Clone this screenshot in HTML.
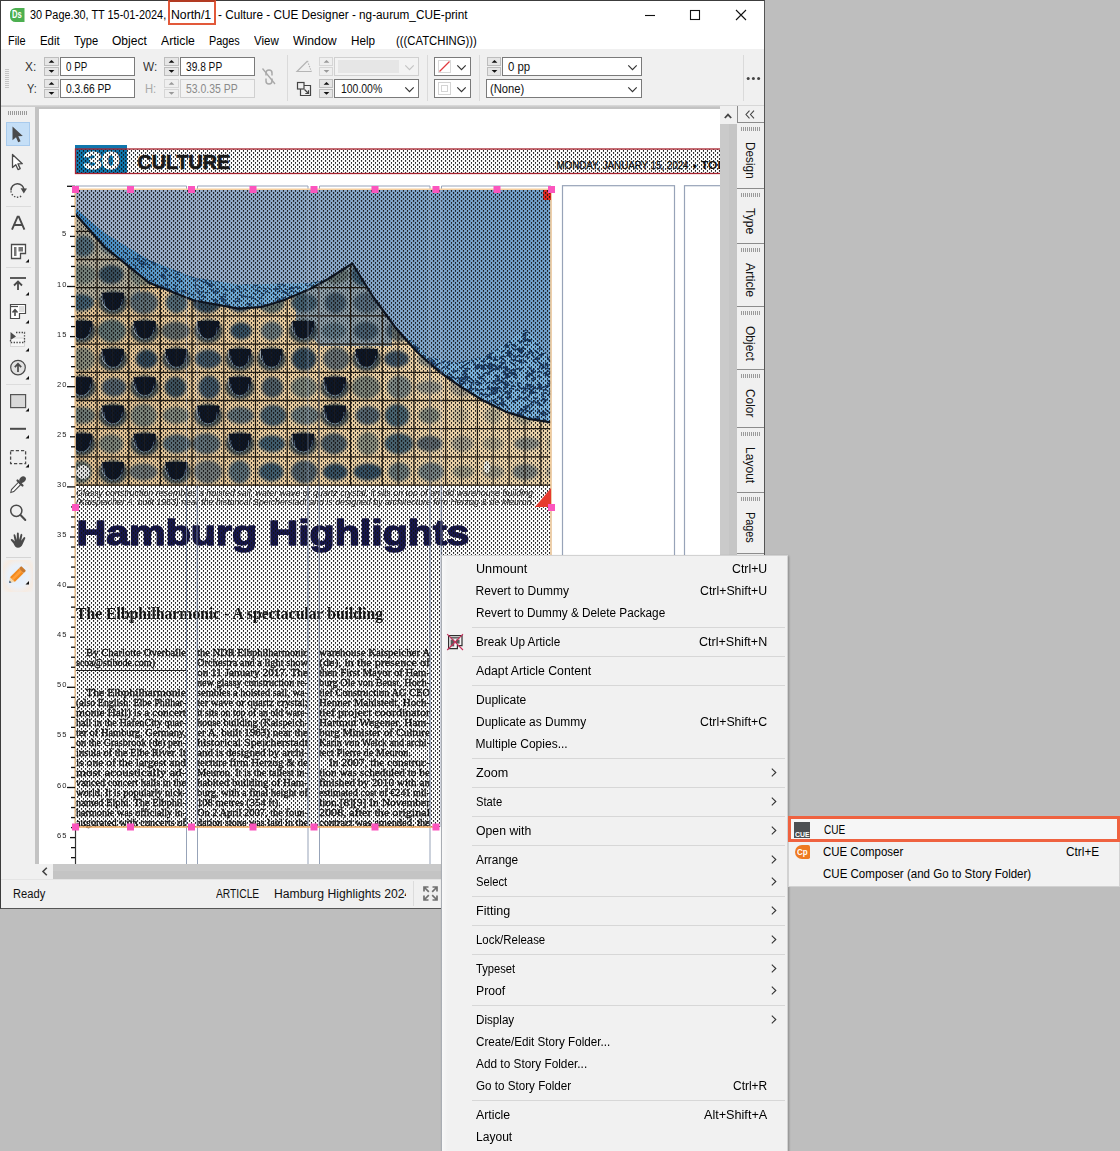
<!DOCTYPE html>
<html><head><meta charset="utf-8"><title>CUE Designer</title>
<style>
html,body{margin:0;padding:0;}
body{width:1120px;height:1151px;overflow:hidden;background:#bebebe;position:relative;font-family:"Liberation Sans",sans-serif;font-size:12px;color:#111;}
.a{position:absolute;}
.t{position:absolute;white-space:pre;color:#111;transform-origin:0 0;}
.fld{position:absolute;background:#fff;border:1px solid #7a7a7a;box-sizing:border-box;}
.fld.dis{background:#f3f3f3;border-color:#d0d0d0;}
.spn{position:absolute;background:#e4e4e4;border:1px solid #c2c2c2;box-sizing:border-box;}
.sep{position:absolute;background:#d7d7d7;height:1px;}
.vsep{position:absolute;background:#dadada;width:1px;}
.tab{position:absolute;left:737px;width:27px;background:#f0f0f0;border-top:1px solid #8c8c8c;box-sizing:border-box;}
.grip{position:absolute;height:4px;background:repeating-linear-gradient(90deg,#9a9a9a 0,#9a9a9a 1px,transparent 1px,transparent 2px);}
.vt{position:absolute;white-space:pre;transform-origin:0 0;transform:rotate(90deg);color:#111;}
</style></head><body>
<div class="a" id="win" style="left:0;top:0;width:765px;height:909px;background:#f0f0f0;overflow:hidden;"><div class="a" style="left:0;top:0;width:765px;height:49px;background:#fff;"></div><svg class="a" style="left:10px;top:8px" width="15" height="14" viewBox="0 0 15 14"><path d="M5.5 0H14.5V14H5.5A5.5 5.5 0 0 1 0 8.5V5.5A5.5 5.5 0 0 1 5.5 0Z" fill="#4caf50"/></svg><span class="t" style="left:12.40px;top:10.04px;font:normal bold 10px/10px 'Liberation Sans';transform:scaleX(0.7658);color:#fff;">Ds</span><span class="t" style="left:30.10px;top:9.44px;font:normal normal 12px/12px 'Liberation Sans';transform:scaleX(0.9059);color:#000;">30 Page.30, TT 15-01-2024,</span><span class="t" style="left:171.30px;top:9.44px;font:normal normal 12px/12px 'Liberation Sans';transform:scaleX(1.0188);color:#000;">North/1</span><span class="t" style="left:217.60px;top:9.44px;font:normal normal 12px/12px 'Liberation Sans';transform:scaleX(0.9794);color:#000;">- Culture - CUE Designer - ng-aurum_CUE-print</span><svg class="a" style="left:640px;top:5px" width="115" height="20" viewBox="0 0 115 20" fill="none" stroke="#111" stroke-width="1.1">
<path d="M5 10.5H15"/><rect x="50.5" y="5.5" width="9" height="9"/><path d="M96 5L106 15M106 5L96 15"/></svg><span class="t" style="left:8.20px;top:34.54px;font:normal normal 12px/12px 'Liberation Sans';transform:scaleX(0.9099);color:#000;">File</span><span class="t" style="left:40.00px;top:34.54px;font:normal normal 12px/12px 'Liberation Sans';transform:scaleX(0.9474);color:#000;">Edit</span><span class="t" style="left:73.90px;top:34.54px;font:normal normal 12px/12px 'Liberation Sans';transform:scaleX(0.9264);color:#000;">Type</span><span class="t" style="left:111.90px;top:34.54px;font:normal normal 12px/12px 'Liberation Sans';transform:scaleX(1.0032);color:#000;">Object</span><span class="t" style="left:160.80px;top:34.54px;font:normal normal 12px/12px 'Liberation Sans';transform:scaleX(1.0167);color:#000;">Article</span><span class="t" style="left:209.00px;top:34.54px;font:normal normal 12px/12px 'Liberation Sans';transform:scaleX(0.9051);color:#000;">Pages</span><span class="t" style="left:254.10px;top:34.54px;font:normal normal 12px/12px 'Liberation Sans';transform:scaleX(0.9575);color:#000;">View</span><span class="t" style="left:293.20px;top:34.54px;font:normal normal 12px/12px 'Liberation Sans';transform:scaleX(1.0214);color:#000;">Window</span><span class="t" style="left:351.20px;top:34.54px;font:normal normal 12px/12px 'Liberation Sans';transform:scaleX(0.9762);color:#000;">Help</span><span class="t" style="left:395.60px;top:34.54px;font:normal normal 12px/12px 'Liberation Sans';transform:scaleX(0.9421);color:#000;">(((CATCHING)))</span><div class="a" style="left:5px;top:69px;width:4px;height:19px;background:repeating-linear-gradient(180deg,#c4c4c4 0,#c4c4c4 1px,transparent 1px,transparent 2px);"></div><span class="t" style="left:25.10px;top:60.94px;font:normal normal 12px/12px 'Liberation Sans';transform:scaleX(0.9873);color:#333;">X:</span><span class="t" style="left:26.60px;top:83.14px;font:normal normal 12px/12px 'Liberation Sans';transform:scaleX(0.9076);color:#333;">Y:</span><div class="spn" style="left:44px;top:57px;width:15px;height:9px;background:#e6e6e6;border-color:#bdbdbd"></div><div class="spn" style="left:44px;top:67px;width:15px;height:9px;background:#e6e6e6;border-color:#bdbdbd"></div><svg class="a" style="left:48px;top:57px" width="7" height="19" viewBox="0 0 7 19"><path d="M0.6 5.8L3.5 2.9L6.4 5.8Z" fill="#111"/><path d="M0.6 12.9L3.5 15.8L6.4 12.9Z" fill="#111"/></svg><div class="spn" style="left:44px;top:79px;width:15px;height:9px;background:#e6e6e6;border-color:#bdbdbd"></div><div class="spn" style="left:44px;top:89px;width:15px;height:9px;background:#e6e6e6;border-color:#bdbdbd"></div><svg class="a" style="left:48px;top:79px" width="7" height="19" viewBox="0 0 7 19"><path d="M0.6 5.8L3.5 2.9L6.4 5.8Z" fill="#111"/><path d="M0.6 12.9L3.5 15.8L6.4 12.9Z" fill="#111"/></svg><div class="fld" style="left:60px;top:57px;width:75px;height:19px"></div><div class="fld" style="left:60px;top:79px;width:75px;height:19px"></div><span class="t" style="left:65.60px;top:60.94px;font:normal normal 12px/12px 'Liberation Sans';transform:scaleX(0.8149);">0 PP</span><span class="t" style="left:65.60px;top:83.14px;font:normal normal 12px/12px 'Liberation Sans';transform:scaleX(0.8574);">0.3.66 PP</span><span class="t" style="left:142.60px;top:60.94px;font:normal normal 12px/12px 'Liberation Sans';transform:scaleX(0.9825);color:#333;">W:</span><span class="t" style="left:145.10px;top:83.14px;font:normal normal 12px/12px 'Liberation Sans';transform:scaleX(0.9333);color:#a8a8a8;">H:</span><div class="spn" style="left:164px;top:57px;width:15px;height:9px;background:#e6e6e6;border-color:#bdbdbd"></div><div class="spn" style="left:164px;top:67px;width:15px;height:9px;background:#e6e6e6;border-color:#bdbdbd"></div><svg class="a" style="left:168px;top:57px" width="7" height="19" viewBox="0 0 7 19"><path d="M0.6 5.8L3.5 2.9L6.4 5.8Z" fill="#111"/><path d="M0.6 12.9L3.5 15.8L6.4 12.9Z" fill="#111"/></svg><div class="spn" style="left:164px;top:79px;width:15px;height:9px;background:#efefef;border-color:#d6d6d6"></div><div class="spn" style="left:164px;top:89px;width:15px;height:9px;background:#efefef;border-color:#d6d6d6"></div><svg class="a" style="left:168px;top:79px" width="7" height="19" viewBox="0 0 7 19"><path d="M0.6 5.8L3.5 2.9L6.4 5.8Z" fill="#9a9a9a"/><path d="M0.6 12.9L3.5 15.8L6.4 12.9Z" fill="#9a9a9a"/></svg><div class="fld" style="left:180px;top:57px;width:75px;height:19px"></div><div class="fld dis" style="left:180px;top:79px;width:75px;height:19px"></div><span class="t" style="left:185.60px;top:60.94px;font:normal normal 12px/12px 'Liberation Sans';transform:scaleX(0.8477);">39.8 PP</span><span class="t" style="left:185.60px;top:83.14px;font:normal normal 12px/12px 'Liberation Sans';transform:scaleX(0.8705);color:#8a8a8a;">53.0.35 PP</span><svg class="a" style="left:260px;top:66px" width="18" height="22" viewBox="0 0 18 22" fill="none" stroke="#a9a9a9" stroke-width="1.5"><path d="M6 9.5V7a3 3 0 0 1 6 0V9.5M6 12.5v2.5a3 3 0 0 0 6 0V12.5"/><path d="M2.5 2.5L15 18" stroke-width="1.3"/></svg><div class="vsep" style="left:287px;top:55px;height:46px"></div><svg class="a" style="left:295px;top:58px" width="18" height="16" viewBox="0 0 18 16" fill="none" stroke="#b5b5b5" stroke-width="1.2"><path d="M12.5 3L2 13.5H16.5"/><path d="M12.5 3L16.3 13.5" stroke-dasharray="1.4 1.2"/></svg><svg class="a" style="left:296px;top:81px" width="17" height="16" viewBox="0 0 17 16" fill="none" stroke="#444" stroke-width="1.2"><rect x="1.5" y="1.5" width="6.5" height="6.5"/><path d="M4.5 8V14.5H14.5V4.5H8"/><path d="M8.5 8.5L12.5 12.5M12.5 9.3V12.5H9.3"/></svg><div class="spn" style="left:319px;top:57px;width:14px;height:9px;background:#efefef;border-color:#d6d6d6"></div><div class="spn" style="left:319px;top:67px;width:14px;height:9px;background:#efefef;border-color:#d6d6d6"></div><svg class="a" style="left:322.5px;top:57px" width="7" height="19" viewBox="0 0 7 19"><path d="M0.6 5.8L3.5 2.9L6.4 5.8Z" fill="#9a9a9a"/><path d="M0.6 12.9L3.5 15.8L6.4 12.9Z" fill="#9a9a9a"/></svg><div class="spn" style="left:319px;top:79px;width:14px;height:9px;background:#e6e6e6;border-color:#bdbdbd"></div><div class="spn" style="left:319px;top:89px;width:14px;height:9px;background:#e6e6e6;border-color:#bdbdbd"></div><svg class="a" style="left:322.5px;top:79px" width="7" height="19" viewBox="0 0 7 19"><path d="M0.6 5.8L3.5 2.9L6.4 5.8Z" fill="#111"/><path d="M0.6 12.9L3.5 15.8L6.4 12.9Z" fill="#111"/></svg><div class="fld dis" style="left:334px;top:57px;width:85px;height:19px"></div><div class="a" style="left:338px;top:60px;width:61px;height:13px;background:#e6e6e6"></div><svg class="a" style="left:404px;top:64px" width="11" height="7" viewBox="0 0 11 7"><path d="M1.3 1.4L5.5 5.6L9.7 1.4" fill="none" stroke="#c4c4c4" stroke-width="1.2"/></svg><div class="fld" style="left:334px;top:79px;width:85px;height:19px"></div><span class="t" style="left:340.60px;top:83.14px;font:normal normal 12px/12px 'Liberation Sans';transform:scaleX(0.8697);">100.00%</span><svg class="a" style="left:404px;top:86px" width="11" height="7" viewBox="0 0 11 7"><path d="M1.3 1.4L5.5 5.6L9.7 1.4" fill="none" stroke="#333" stroke-width="1.2"/></svg><div class="vsep" style="left:427px;top:55px;height:46px"></div><div class="fld" style="left:434px;top:57px;width:37px;height:19px"></div><svg class="a" style="left:438px;top:60px" width="13" height="13" viewBox="0 0 13 13"><rect x="0.5" y="0.5" width="12" height="12" fill="#fff" stroke="#d9d9d9"/><path d="M1.5 11.5L11.5 1.5" stroke="#e0393e" stroke-width="1.3"/></svg><svg class="a" style="left:456px;top:64px" width="11" height="7" viewBox="0 0 11 7"><path d="M1.3 1.4L5.5 5.6L9.7 1.4" fill="none" stroke="#333" stroke-width="1.2"/></svg><div class="fld" style="left:434px;top:79px;width:37px;height:19px"></div><svg class="a" style="left:438px;top:82px" width="13" height="13" viewBox="0 0 13 13" fill="none" stroke="#d4d4d4"><rect x="0.5" y="0.5" width="12" height="12"/><rect x="3.5" y="3.5" width="6" height="6"/></svg><svg class="a" style="left:456px;top:86px" width="11" height="7" viewBox="0 0 11 7"><path d="M1.3 1.4L5.5 5.6L9.7 1.4" fill="none" stroke="#333" stroke-width="1.2"/></svg><div class="vsep" style="left:479px;top:55px;height:46px"></div><div class="spn" style="left:487px;top:57px;width:14px;height:9px;background:#e6e6e6;border-color:#bdbdbd"></div><div class="spn" style="left:487px;top:67px;width:14px;height:9px;background:#e6e6e6;border-color:#bdbdbd"></div><svg class="a" style="left:490.5px;top:57px" width="7" height="19" viewBox="0 0 7 19"><path d="M0.6 5.8L3.5 2.9L6.4 5.8Z" fill="#111"/><path d="M0.6 12.9L3.5 15.8L6.4 12.9Z" fill="#111"/></svg><div class="fld" style="left:502px;top:57px;width:140px;height:19px"></div><span class="t" style="left:507.60px;top:60.94px;font:normal normal 12px/12px 'Liberation Sans';transform:scaleX(0.9504);">0 pp</span><svg class="a" style="left:627px;top:64px" width="11" height="7" viewBox="0 0 11 7"><path d="M1.3 1.4L5.5 5.6L9.7 1.4" fill="none" stroke="#333" stroke-width="1.2"/></svg><div class="fld" style="left:486px;top:79px;width:156px;height:19px"></div><span class="t" style="left:489.60px;top:83.14px;font:normal normal 12px/12px 'Liberation Sans';transform:scaleX(0.9322);">(None)</span><svg class="a" style="left:627px;top:86px" width="11" height="7" viewBox="0 0 11 7"><path d="M1.3 1.4L5.5 5.6L9.7 1.4" fill="none" stroke="#333" stroke-width="1.2"/></svg><div class="vsep" style="left:743px;top:55px;height:46px"></div><svg class="a" style="left:746px;top:76px" width="15" height="5" viewBox="0 0 15 5" fill="#444"><circle cx="2.2" cy="2.5" r="1.5"/><circle cx="7.4" cy="2.5" r="1.5"/><circle cx="12.6" cy="2.5" r="1.5"/></svg><div class="a" style="left:1px;top:105px;width:763px;height:4px;background:linear-gradient(180deg,#dcdcdc,#c3c3c3 60%,#c3c3c3)"></div><div class="a" style="left:1px;top:107px;width:34px;height:773px;background:#f0f0f0"></div><div class="a" style="left:35px;top:107px;width:4px;height:757px;background:#c3c3c3"></div><div class="grip" style="left:8px;top:111px;width:20px;"></div><div class="a" style="left:6px;top:122px;width:24px;height:24px;background:#c5dff7;border:1px solid #a9cbed;box-sizing:border-box"></div><svg class="a" style="left:8px;top:124px" width="22" height="22" viewBox="0 0 22 22"><path d="M4.5 2.5L4.5 16.2L8 13.2L10.2 18.3L12.6 17.2L10.3 12.3L14.8 12.1Z" fill="#4a4a4a"/></svg><svg class="a" style="left:8px;top:152px" width="22" height="22" viewBox="0 0 22 22"><path d="M4.5 2.5L4.5 15.5L7.8 12.7L10 17.6L12.2 16.6L10 11.9L14.3 11.7Z" fill="#fff" stroke="#4a4a4a" stroke-width="1.3" stroke-linejoin="round"/></svg><svg class="a" style="left:8px;top:179px" width="22" height="22" viewBox="0 0 22 22"><path d="M3 11.5A6.5 6.5 0 0 1 16 11" fill="none" stroke="#4a4a4a" stroke-width="1.5"/><path d="M12.6 9.2L19 9.6L15.8 14.6Z" fill="#4a4a4a"/><path d="M3 12.2A6.5 6.5 0 0 0 13.5 16.8" fill="none" stroke="#4a4a4a" stroke-width="1.4" stroke-dasharray="1.4 1.6"/></svg><div class="sep" style="left:6px;top:206px;width:25px;background:#dcdcdc"></div><svg class="a" style="left:8px;top:212px" width="22" height="22" viewBox="0 0 22 22"><path d="M4 17.6L9.6 4.6H10.8L16.4 17.6M6 13H14.4" fill="none" stroke="#4a4a4a" stroke-width="1.9"/></svg><svg class="a" style="left:8px;top:241px" width="22" height="22" viewBox="0 0 22 22"><path d="M3.5 3.5H17.5V12.5H12.5V17.5H3.5Z" fill="#fff" stroke="#4a4a4a" stroke-width="1.3"/><rect x="6" y="6" width="2.5" height="9" fill="#777"/><rect x="10.5" y="6" width="4.5" height="4.5" fill="#777"/><path d="M21 18V21.5H17.5Z" fill="#111"/></svg><div class="sep" style="left:6px;top:267px;width:25px;background:#dcdcdc"></div><svg class="a" style="left:8px;top:268px" width="22" height="28" viewBox="0 0 22 28"><path d="M2 10H18" stroke="#4a4a4a" stroke-width="1.8"/><path d="M10 22V14M6 17.5L10 13.5L14 17.5" fill="none" stroke="#4a4a4a" stroke-width="1.8"/><path d="M21 24V27.5H17.5Z" fill="#111"/></svg><svg class="a" style="left:8px;top:296px" width="22" height="28" viewBox="0 0 22 28"><path d="M2.5 8.5H17.5V17.5H11.5V22.5H2.5Z" fill="#fff" stroke="#4a4a4a" stroke-width="1.2"/><path d="M3 10.5H10" stroke="#4a4a4a" stroke-width="1.2"/><rect x="11" y="10" width="5" height="6" fill="#ddd"/><path d="M7 20V14M4.5 16.5L7 13.7L9.5 16.5" fill="none" stroke="#4a4a4a" stroke-width="1.6"/><path d="M21 24V27.5H17.5Z" fill="#111"/></svg><svg class="a" style="left:8px;top:324px" width="22" height="28" viewBox="0 0 22 28"><rect x="2.5" y="14" width="14" height="8.5" fill="#f6f6f6" stroke="#d0d0d0" stroke-width="0.8"/><path d="M8 8.5H16.5V18.5H2.5V16" fill="none" stroke="#4a4a4a" stroke-width="1.3" stroke-dasharray="1.4 1.4"/><path d="M2.5 8L2.5 16L8 12.5Z" fill="#4a4a4a"/><path d="M21 24V27.5H17.5Z" fill="#111"/></svg><svg class="a" style="left:8px;top:356px" width="22" height="24" viewBox="0 0 22 24"><circle cx="10" cy="11.6" r="7.3" fill="#e2e2e2" stroke="#4a4a4a" stroke-width="1.2"/><path d="M10 16V8.5M6.8 11.2L10 7.8L13.2 11.2" fill="none" stroke="#4a4a4a" stroke-width="1.7"/><path d="M21 20V23.5H17.5Z" fill="#111"/></svg><div class="sep" style="left:6px;top:384px;width:25px;background:#dcdcdc"></div><svg class="a" style="left:8px;top:390px" width="22" height="22" viewBox="0 0 22 22"><rect x="2.6" y="4.6" width="15" height="13" fill="#d9d9d9" stroke="#555" stroke-width="1.2"/><path d="M21 18V21.5H17.5Z" fill="#111"/></svg><svg class="a" style="left:8px;top:420px" width="22" height="22" viewBox="0 0 22 22"><path d="M2 8.8H18" stroke="#4a4a4a" stroke-width="2"/><path d="M21 15V18.5H17.5Z" fill="#111"/></svg><svg class="a" style="left:8px;top:446px" width="22" height="22" viewBox="0 0 22 22"><rect x="2.6" y="4.6" width="15" height="13" fill="none" stroke="#4a4a4a" stroke-width="1.3" stroke-dasharray="3.2 2"/><path d="M21 18V21.5H17.5Z" fill="#111"/></svg><svg class="a" style="left:8px;top:474px" width="22" height="22" viewBox="0 0 22 22"><path d="M2.8 18.5L3.5 15.5L10.5 8.2L12.8 10.5L5.8 17.6Z" fill="#fff" stroke="#4a4a4a" stroke-width="1.1"/><path d="M9.5 6.5L14.5 11.5" stroke="#4a4a4a" stroke-width="2.2" stroke-linecap="round"/><ellipse cx="14.6" cy="5.6" rx="3.6" ry="2.8" transform="rotate(-45 14.6 5.6)" fill="#4a4a4a"/></svg><svg class="a" style="left:8px;top:502px" width="22" height="22" viewBox="0 0 22 22"><circle cx="8.3" cy="8.8" r="5.6" fill="none" stroke="#4a4a4a" stroke-width="1.5"/><path d="M12.5 13L17.3 18" stroke="#4a4a4a" stroke-width="2" stroke-linecap="round"/></svg><svg class="a" style="left:8px;top:530px" width="22" height="22" viewBox="0 0 22 22"><path d="M5.5 13.5L3 10.5Q2.3 9.3 3.4 9Q4.3 8.9 5.2 9.8L6.8 11.5L5.6 5.4Q5.5 4.3 6.3 4.2Q7.1 4.2 7.4 5.2L8.7 10L8.9 3.6Q9 2.6 9.8 2.6Q10.7 2.6 10.8 3.6L11 10L12.6 4.6Q12.9 3.7 13.7 3.9Q14.5 4.2 14.3 5.2L13.2 10.8L15.6 7.6Q16.3 6.8 17 7.3Q17.6 7.9 17.1 8.8L14.6 14.2Q13.3 17.6 10 17.7Q7 17.7 5.5 13.5Z" fill="#4a4a4a"/></svg><div class="sep" style="left:6px;top:557px;width:25px;background:#d4d4d4"></div><div class="a" style="left:3px;top:560px;width:30px;height:32px;background:radial-gradient(ellipse at center,#e3eefb 0,#eaf1fa 45%,#f6ebe2 75%,#f0f0f0 100%)"></div><svg class="a" style="left:8px;top:563px" width="22" height="22" viewBox="0 0 22 22"><g transform="rotate(-45 10 11)"><rect x="2" y="7.6" width="12.5" height="6.8" fill="#f28a1e"/><rect x="2" y="9.6" width="12.5" height="2.6" fill="#ff9f3a"/><rect x="14.5" y="7.6" width="3.5" height="6.8" rx="1" fill="#c9792e"/><path d="M2 7.6L-2.5 11L2 14.4Z" fill="#f3d9b0"/><path d="M-0.6 9.6L-2.6 11L-0.6 12.4Z" fill="#2f4f7a"/></g><path d="M21 18V21.5H17.5Z" fill="#111"/></svg><div class="a" id="canvas" style="left:39px;top:109px;width:681px;height:755px;background:#fff;overflow:hidden"><svg class="a" style="left:0;top:0" width="681" height="755" viewBox="39 109 681 755" font-family="Liberation Sans, sans-serif"><defs>
<pattern id="hatch" width="4" height="4" patternUnits="userSpaceOnUse"><rect x="2.95" y="2.1" width="1.2" height="1.65" fill="#101010"/><rect x="0.95" y="0.1" width="1.2" height="1.65" fill="#101010"/></pattern>
<pattern id="scales" width="7" height="6" patternUnits="userSpaceOnUse"><path d="M0 3L2 1.5L3.5 3M3.5 6L5.5 4.5L7 6" stroke="#0e2c55" stroke-width="1.3" fill="none"/></pattern>
<pattern id="scales2" width="9" height="5" patternUnits="userSpaceOnUse" patternTransform="rotate(28)"><path d="M0 2.5H3.5M5 5H8" stroke="#123a6b" stroke-width="1.1" fill="none" opacity="0.75"/></pattern>
<linearGradient id="sky" x1="0" y1="0" x2="1" y2="0"><stop offset="0" stop-color="#a0b0c8"/><stop offset="0.45" stop-color="#8ea9c8"/><stop offset="1" stop-color="#70a0cc"/></linearGradient>
<linearGradient id="band" x1="0" y1="0" x2="1" y2="0"><stop offset="0" stop-color="#3f86c0"/><stop offset="0.5" stop-color="#69a6d4"/><stop offset="1" stop-color="#78b2dc"/></linearGradient>
<linearGradient id="fac" x1="0" y1="0" x2="1" y2="0"><stop offset="0" stop-color="#e2c293"/><stop offset="0.5" stop-color="#edd0a2"/><stop offset="1" stop-color="#eed6ad"/></linearGradient>
<clipPath id="facclip"><path id="facp" d="M75,213.5 L104.6,247 L149,282.7 L194,300.5 L238.6,308.6 L261,307 L283,300.5 L310,289 L328,279 L352.4,263.5 L372.5,296 L395,327 L417,352 L439.5,372 L462,387.6 L484,401 L506.4,412 L528.8,419 L551,422.4 L551,486 L75,486 Z"/></clipPath>
<filter id="blur2" x="-5%" y="-5%" width="110%" height="110%"><feGaussianBlur stdDeviation="1.8"/></filter><filter id="blur05"><feGaussianBlur stdDeviation="0.5"/></filter><clipPath id="imgclip"><rect x="75" y="190" width="476" height="296"/></clipPath>
</defs><rect x="75" y="145" width="52" height="28.5" fill="#0f77ad"/><text x="83.5" y="168.6" font-size="24" font-weight="bold" fill="#fff" stroke="#fff" stroke-width="1.1" textLength="36" lengthAdjust="spacingAndGlyphs">30</text><text x="137.5" y="168.6" font-size="20.5" font-weight="bold" fill="#1c1c1c" stroke="#1c1c1c" stroke-width="0.7" textLength="92.5" lengthAdjust="spacingAndGlyphs">CULTURE</text><text x="556.5" y="169" font-size="10" fill="#111" stroke="#111" stroke-width="0.25" textLength="132" lengthAdjust="spacingAndGlyphs">MONDAY, JANUARY 15, 2024</text><text x="692.5" y="169" font-size="9" fill="#111">♦</text><text x="701" y="169" font-size="10" font-weight="bold" fill="#111" textLength="52" lengthAdjust="spacingAndGlyphs">TODAY’S</text><rect x="75" y="149" width="700" height="24.5" fill="url(#hatch)"/><rect x="75.5" y="149" width="700" height="24.5" fill="none" stroke="#a8222f" stroke-width="1.3"/><path d="M75.5 870V186H186.5V870" fill="none" stroke="#97a3b8" stroke-width="1"/><path d="M197.5 870V186H308V870" fill="none" stroke="#97a3b8" stroke-width="1"/><path d="M319.5 870V186H430V870" fill="none" stroke="#97a3b8" stroke-width="1"/><path d="M441.5 870V186H551V870" fill="none" stroke="#97a3b8" stroke-width="1"/><rect x="562.5" y="185.7" width="112" height="700" fill="none" stroke="#97a3b8" stroke-width="1.2"/><rect x="684.5" y="185.7" width="112" height="700" fill="none" stroke="#97a3b8" stroke-width="1.2"/><g clip-path="url(#imgclip)"><rect x="75" y="190" width="476" height="296" fill="url(#sky)"/><clipPath id="brclip"><path d="M404,333 L428.6,357 L457,363 L485.7,355.7 L507,343 L525.7,328.6 L537,341.4 L551,361 L551,423 L528.8,419 L506.4,412 L484,401 L462,387.6 L439.5,372 L417,352 Z"/></clipPath><path d="M404,333 L428.6,357 L457,363 L485.7,355.7 L507,343 L525.7,328.6 L537,341.4 L551,361 L551,423 L528.8,419 L506.4,412 L484,401 L462,387.6 L439.5,372 L417,352 Z" fill="#7cb4e0"/><g clip-path="url(#brclip)" stroke="#0f2f5c" stroke-width="1.5" stroke-linecap="round" opacity="0.85"><path d="M452.6 342.5l3.2 -1.6"/><path d="M415.6 379.4l3.5 0.3"/><path d="M490.7 415.3l2.8 1.8"/><path d="M410.5 369.6l3.2 -1.6"/><path d="M440.4 380.9l3.2 -1.6"/><path d="M526.5 339.9l2.8 1.8"/><path d="M497.7 384.0l3.2 -1.6"/><path d="M489.8 366.1l2.8 1.8"/><path d="M411.8 410.4l3.5 0.3"/><path d="M466.6 379.9l1.5 -2.2"/><path d="M450.3 406.3l2.8 1.8"/><path d="M420.1 382.8l2.8 1.8"/><path d="M459.7 380.6l3.2 -1.6"/><path d="M488.0 387.4l2.0 2.2"/><path d="M505.0 369.0l3.5 0.3"/><path d="M473.4 416.7l3.5 0.3"/><path d="M449.1 404.3l2.8 1.8"/><path d="M417.0 356.8l2.0 2.2"/><path d="M533.6 398.0l3.5 0.3"/><path d="M494.5 335.0l1.5 -2.2"/><path d="M466.5 400.7l2.8 1.8"/><path d="M542.2 368.5l3.2 -1.6"/><path d="M517.4 383.0l3.5 0.3"/><path d="M455.0 361.6l2.0 2.2"/><path d="M490.2 371.8l3.2 -1.6"/><path d="M543.9 373.5l3.2 -1.6"/><path d="M413.9 395.3l1.5 -2.2"/><path d="M551.0 406.9l3.5 0.3"/><path d="M510.3 413.2l3.5 0.3"/><path d="M408.3 372.3l2.8 1.8"/><path d="M494.8 375.4l2.8 1.8"/><path d="M517.9 340.4l2.8 1.8"/><path d="M463.5 416.0l2.0 2.2"/><path d="M416.8 371.1l1.5 -2.2"/><path d="M445.8 341.1l2.0 2.2"/><path d="M532.0 354.7l2.0 2.2"/><path d="M550.0 393.5l2.0 2.2"/><path d="M545.8 342.5l2.8 1.8"/><path d="M427.2 391.2l3.2 -1.6"/><path d="M476.3 384.6l3.5 0.3"/><path d="M446.4 342.0l1.5 -2.2"/><path d="M459.3 382.4l2.8 1.8"/><path d="M506.5 377.5l1.5 -2.2"/><path d="M501.3 399.0l2.0 2.2"/><path d="M537.2 402.9l1.5 -2.2"/><path d="M462.7 366.3l3.2 -1.6"/><path d="M475.8 366.4l2.8 1.8"/><path d="M414.9 348.0l2.8 1.8"/><path d="M421.2 385.7l3.2 -1.6"/><path d="M405.0 342.5l3.2 -1.6"/><path d="M544.5 386.9l3.2 -1.6"/><path d="M533.5 387.0l2.8 1.8"/><path d="M498.3 419.7l1.5 -2.2"/><path d="M458.5 339.8l2.0 2.2"/><path d="M551.0 372.7l2.0 2.2"/><path d="M450.8 341.8l3.5 0.3"/><path d="M513.8 373.9l2.8 1.8"/><path d="M480.9 347.7l1.5 -2.2"/><path d="M458.2 394.2l3.2 -1.6"/><path d="M516.4 356.6l3.2 -1.6"/><path d="M507.3 353.1l3.5 0.3"/><path d="M538.5 362.1l2.8 1.8"/><path d="M483.3 402.8l3.5 0.3"/><path d="M498.6 386.9l2.8 1.8"/><path d="M523.5 406.6l2.8 1.8"/><path d="M434.4 375.3l3.2 -1.6"/><path d="M550.5 403.9l2.0 2.2"/><path d="M443.1 394.5l3.5 0.3"/><path d="M470.7 418.0l3.5 0.3"/><path d="M545.4 363.0l2.8 1.8"/><path d="M420.0 373.1l3.5 0.3"/><path d="M435.0 387.9l1.5 -2.2"/><path d="M528.5 374.0l3.5 0.3"/><path d="M522.5 336.1l3.2 -1.6"/><path d="M538.7 403.1l2.8 1.8"/><path d="M475.3 345.1l3.5 0.3"/><path d="M417.8 418.8l2.0 2.2"/><path d="M473.1 399.4l3.2 -1.6"/><path d="M511.5 344.3l2.8 1.8"/><path d="M409.0 384.7l2.0 2.2"/><path d="M523.6 342.0l1.5 -2.2"/><path d="M549.1 391.1l3.5 0.3"/><path d="M427.9 380.6l3.2 -1.6"/><path d="M407.1 421.2l3.2 -1.6"/><path d="M482.4 417.6l2.0 2.2"/><path d="M550.0 346.7l2.8 1.8"/><path d="M409.1 348.4l1.5 -2.2"/><path d="M440.4 384.3l3.5 0.3"/><path d="M485.0 408.1l3.2 -1.6"/><path d="M538.8 362.0l2.0 2.2"/><path d="M502.4 406.2l1.5 -2.2"/><path d="M466.8 416.1l1.5 -2.2"/><path d="M424.2 342.6l1.5 -2.2"/><path d="M407.7 370.3l2.8 1.8"/><path d="M494.5 402.5l2.8 1.8"/><path d="M430.3 373.5l3.2 -1.6"/><path d="M486.8 359.3l1.5 -2.2"/><path d="M483.0 374.3l3.2 -1.6"/><path d="M534.8 333.5l2.8 1.8"/><path d="M445.7 402.1l1.5 -2.2"/><path d="M471.5 330.7l3.2 -1.6"/><path d="M470.2 386.8l1.5 -2.2"/><path d="M494.1 347.1l3.5 0.3"/><path d="M471.5 379.2l2.0 2.2"/><path d="M479.6 351.8l1.5 -2.2"/><path d="M533.9 418.4l3.5 0.3"/><path d="M540.6 413.7l2.8 1.8"/><path d="M528.5 341.2l3.2 -1.6"/><path d="M462.7 358.3l2.8 1.8"/><path d="M468.0 348.4l3.5 0.3"/><path d="M520.2 414.1l2.8 1.8"/><path d="M543.1 389.8l3.5 0.3"/><path d="M426.0 412.8l2.0 2.2"/><path d="M437.3 419.4l2.0 2.2"/><path d="M535.1 343.6l2.8 1.8"/><path d="M428.7 369.4l1.5 -2.2"/><path d="M464.4 368.4l3.5 0.3"/><path d="M451.8 397.3l3.2 -1.6"/><path d="M454.7 372.0l3.2 -1.6"/><path d="M461.5 377.7l3.5 0.3"/><path d="M480.3 334.2l2.8 1.8"/><path d="M547.8 338.1l3.5 0.3"/><path d="M445.0 415.0l2.8 1.8"/><path d="M444.8 340.4l2.0 2.2"/><path d="M529.9 392.9l3.5 0.3"/><path d="M464.7 379.5l1.5 -2.2"/><path d="M488.9 395.2l3.2 -1.6"/><path d="M446.0 404.8l2.8 1.8"/><path d="M467.5 335.0l3.2 -1.6"/><path d="M498.3 405.0l3.2 -1.6"/><path d="M494.4 349.4l3.5 0.3"/><path d="M531.8 371.6l3.5 0.3"/><path d="M551.2 368.1l3.5 0.3"/><path d="M496.4 332.1l2.8 1.8"/><path d="M542.9 421.0l3.5 0.3"/><path d="M412.4 347.4l3.5 0.3"/><path d="M497.4 379.0l2.8 1.8"/><path d="M447.6 376.0l2.8 1.8"/><path d="M444.8 405.2l3.5 0.3"/><path d="M410.4 329.8l1.5 -2.2"/><path d="M486.0 346.2l2.0 2.2"/><path d="M441.1 370.9l2.0 2.2"/><path d="M501.5 380.4l2.0 2.2"/><path d="M547.6 357.5l2.8 1.8"/><path d="M549.4 360.9l2.8 1.8"/><path d="M464.5 361.4l3.2 -1.6"/><path d="M528.0 329.4l3.5 0.3"/><path d="M468.3 333.3l2.0 2.2"/><path d="M533.0 392.4l3.5 0.3"/><path d="M493.0 394.5l3.2 -1.6"/><path d="M472.5 343.1l2.0 2.2"/><path d="M405.5 363.0l3.5 0.3"/><path d="M548.0 380.5l2.8 1.8"/><path d="M410.1 412.7l2.8 1.8"/><path d="M457.4 328.1l2.0 2.2"/><path d="M417.3 354.8l2.8 1.8"/><path d="M441.5 402.5l3.2 -1.6"/><path d="M443.8 336.6l2.0 2.2"/><path d="M491.3 365.8l3.5 0.3"/><path d="M449.7 350.3l1.5 -2.2"/><path d="M545.8 409.9l2.8 1.8"/><path d="M501.7 396.7l1.5 -2.2"/><path d="M462.3 359.3l2.0 2.2"/><path d="M427.0 397.5l2.8 1.8"/><path d="M411.4 408.2l1.5 -2.2"/><path d="M497.2 398.4l1.5 -2.2"/><path d="M425.5 378.3l1.5 -2.2"/><path d="M488.6 406.0l3.2 -1.6"/><path d="M526.5 384.1l2.8 1.8"/><path d="M417.5 332.0l3.5 0.3"/><path d="M546.0 364.2l2.0 2.2"/><path d="M487.1 388.3l1.5 -2.2"/><path d="M505.1 375.0l3.2 -1.6"/><path d="M472.2 334.7l1.5 -2.2"/><path d="M537.0 336.8l1.5 -2.2"/><path d="M414.7 398.7l3.5 0.3"/><path d="M524.0 409.2l2.8 1.8"/><path d="M512.2 347.7l2.0 2.2"/><path d="M477.6 364.7l2.0 2.2"/><path d="M538.8 355.6l3.2 -1.6"/><path d="M495.7 389.7l3.2 -1.6"/><path d="M493.2 359.9l3.5 0.3"/><path d="M496.3 340.8l2.0 2.2"/><path d="M413.9 353.8l3.2 -1.6"/><path d="M506.8 392.9l3.5 0.3"/><path d="M509.2 355.4l2.0 2.2"/><path d="M473.6 339.4l1.5 -2.2"/><path d="M434.3 421.9l2.0 2.2"/><path d="M407.6 372.1l1.5 -2.2"/><path d="M547.3 371.1l3.5 0.3"/><path d="M461.9 416.0l2.8 1.8"/><path d="M416.0 336.7l1.5 -2.2"/><path d="M443.5 362.5l1.5 -2.2"/><path d="M525.6 376.8l3.2 -1.6"/><path d="M508.4 350.2l2.0 2.2"/><path d="M462.9 343.3l2.0 2.2"/><path d="M505.2 366.9l2.8 1.8"/><path d="M466.2 364.1l3.2 -1.6"/><path d="M528.5 328.2l3.5 0.3"/><path d="M528.3 339.5l2.8 1.8"/><path d="M509.8 414.6l3.5 0.3"/><path d="M442.2 334.2l2.0 2.2"/><path d="M551.8 384.6l3.5 0.3"/><path d="M541.0 400.5l3.2 -1.6"/><path d="M446.3 333.0l3.5 0.3"/><path d="M498.3 342.3l3.5 0.3"/><path d="M469.1 358.3l3.5 0.3"/><path d="M520.4 369.1l3.2 -1.6"/><path d="M524.4 388.6l1.5 -2.2"/><path d="M485.7 397.1l3.2 -1.6"/><path d="M542.2 367.4l1.5 -2.2"/><path d="M515.6 389.9l3.5 0.3"/><path d="M476.4 415.5l1.5 -2.2"/><path d="M423.7 373.3l3.5 0.3"/><path d="M446.4 352.6l3.5 0.3"/><path d="M464.7 350.9l2.0 2.2"/><path d="M486.9 365.9l2.8 1.8"/><path d="M499.6 335.2l1.5 -2.2"/><path d="M538.2 375.7l2.8 1.8"/><path d="M471.6 360.0l2.0 2.2"/><path d="M467.8 380.6l2.8 1.8"/><path d="M418.3 360.8l3.2 -1.6"/><path d="M451.9 363.4l1.5 -2.2"/><path d="M434.7 329.9l2.0 2.2"/><path d="M461.3 399.6l2.8 1.8"/><path d="M460.4 360.5l3.2 -1.6"/><path d="M478.2 383.1l3.5 0.3"/><path d="M423.5 376.3l2.8 1.8"/><path d="M418.6 414.1l2.0 2.2"/><path d="M463.8 370.8l3.5 0.3"/><path d="M529.8 411.8l3.2 -1.6"/><path d="M423.7 368.8l2.0 2.2"/><path d="M547.3 375.0l3.2 -1.6"/><path d="M462.6 417.0l1.5 -2.2"/><path d="M530.8 421.3l2.8 1.8"/><path d="M520.1 349.5l2.8 1.8"/><path d="M481.8 393.5l2.0 2.2"/><path d="M417.5 402.6l3.2 -1.6"/><path d="M520.0 350.3l3.2 -1.6"/><path d="M499.9 357.2l2.8 1.8"/><path d="M497.1 378.7l2.0 2.2"/><path d="M507.7 338.8l3.2 -1.6"/><path d="M449.2 418.6l2.8 1.8"/><path d="M462.0 349.5l1.5 -2.2"/><path d="M405.2 379.6l2.0 2.2"/><path d="M446.0 358.4l2.8 1.8"/><path d="M474.9 350.5l2.8 1.8"/><path d="M409.3 367.5l3.5 0.3"/><path d="M413.1 346.6l2.0 2.2"/><path d="M416.9 349.9l2.0 2.2"/><path d="M541.0 349.8l3.2 -1.6"/><path d="M507.3 397.0l3.5 0.3"/><path d="M505.3 347.0l3.5 0.3"/><path d="M513.7 376.5l2.8 1.8"/><path d="M477.9 347.2l2.8 1.8"/><path d="M438.9 349.3l3.5 0.3"/><path d="M421.0 387.9l1.5 -2.2"/><path d="M432.5 349.4l2.0 2.2"/><path d="M538.8 333.4l1.5 -2.2"/><path d="M426.5 365.8l2.8 1.8"/><path d="M408.5 385.2l2.0 2.2"/><path d="M412.6 333.8l2.0 2.2"/><path d="M471.1 396.4l3.5 0.3"/><path d="M512.7 423.8l2.8 1.8"/><path d="M453.4 345.8l1.5 -2.2"/><path d="M514.7 331.1l2.0 2.2"/><path d="M528.4 422.6l2.0 2.2"/><path d="M429.9 328.3l3.5 0.3"/><path d="M416.9 368.3l3.2 -1.6"/><path d="M487.5 400.8l2.0 2.2"/><path d="M457.4 406.9l2.0 2.2"/><path d="M417.9 395.7l2.8 1.8"/><path d="M459.8 416.3l2.8 1.8"/><path d="M452.5 398.8l2.0 2.2"/><path d="M409.5 367.4l2.0 2.2"/><path d="M411.0 331.3l3.2 -1.6"/><path d="M523.1 334.0l2.8 1.8"/><path d="M514.9 414.3l3.5 0.3"/><path d="M458.4 360.2l1.5 -2.2"/><path d="M411.4 399.7l3.5 0.3"/><path d="M540.9 356.6l1.5 -2.2"/><path d="M539.7 388.9l3.2 -1.6"/><path d="M408.6 350.5l2.0 2.2"/><path d="M510.2 372.7l2.0 2.2"/><path d="M521.1 415.7l2.0 2.2"/><path d="M424.5 375.7l3.2 -1.6"/><path d="M523.0 398.9l2.8 1.8"/><path d="M494.3 359.5l3.5 0.3"/><path d="M472.7 403.2l1.5 -2.2"/><path d="M416.6 346.9l2.8 1.8"/><path d="M441.4 334.2l3.2 -1.6"/><path d="M475.8 380.3l2.8 1.8"/><path d="M549.1 412.8l3.2 -1.6"/><path d="M443.9 336.1l3.2 -1.6"/><path d="M466.9 422.9l2.0 2.2"/><path d="M430.5 340.8l2.0 2.2"/><path d="M496.2 392.7l1.5 -2.2"/><path d="M529.5 391.8l3.2 -1.6"/><path d="M519.6 356.2l3.5 0.3"/><path d="M488.3 363.8l3.5 0.3"/><path d="M434.3 351.8l2.8 1.8"/><path d="M439.6 355.0l1.5 -2.2"/><path d="M432.7 334.2l3.5 0.3"/><path d="M550.9 376.7l2.8 1.8"/><path d="M500.5 337.7l2.0 2.2"/><path d="M550.7 337.8l2.0 2.2"/><path d="M534.8 350.2l2.0 2.2"/><path d="M539.4 331.9l3.5 0.3"/><path d="M439.2 332.8l1.5 -2.2"/><path d="M548.0 384.0l3.2 -1.6"/><path d="M459.7 411.1l2.0 2.2"/><path d="M493.6 402.4l3.2 -1.6"/><path d="M420.5 385.2l1.5 -2.2"/><path d="M456.4 331.6l3.5 0.3"/><path d="M425.8 347.6l3.5 0.3"/><path d="M410.6 398.3l2.8 1.8"/><path d="M524.8 406.6l2.0 2.2"/><path d="M504.7 345.8l3.5 0.3"/><path d="M416.5 331.0l2.0 2.2"/><path d="M485.6 334.1l3.2 -1.6"/><path d="M522.0 391.7l2.8 1.8"/><path d="M499.0 336.8l2.8 1.8"/><path d="M463.5 354.0l3.5 0.3"/><path d="M503.2 368.1l3.2 -1.6"/><path d="M450.9 382.4l3.5 0.3"/><path d="M465.9 329.7l3.5 0.3"/><path d="M499.7 365.5l2.0 2.2"/><path d="M434.9 328.6l2.8 1.8"/><path d="M467.3 406.8l2.0 2.2"/><path d="M489.9 363.0l2.8 1.8"/><path d="M424.1 333.0l2.8 1.8"/><path d="M499.2 415.3l3.2 -1.6"/><path d="M489.2 417.0l1.5 -2.2"/><path d="M430.2 361.4l2.8 1.8"/><path d="M481.6 416.8l3.2 -1.6"/><path d="M461.4 400.3l2.8 1.8"/><path d="M449.3 408.4l3.2 -1.6"/><path d="M548.4 374.3l3.2 -1.6"/><path d="M494.3 389.1l3.2 -1.6"/><path d="M537.9 387.6l2.8 1.8"/><path d="M499.1 410.2l1.5 -2.2"/><path d="M464.5 409.2l2.0 2.2"/><path d="M431.9 348.9l2.0 2.2"/><path d="M543.0 343.0l3.5 0.3"/><path d="M423.1 351.7l2.8 1.8"/><path d="M411.0 382.0l3.2 -1.6"/><path d="M503.2 359.1l2.0 2.2"/><path d="M493.1 380.8l3.5 0.3"/><path d="M500.4 357.6l2.8 1.8"/><path d="M467.6 391.2l2.0 2.2"/><path d="M479.0 345.2l3.2 -1.6"/><path d="M496.0 375.0l2.8 1.8"/><path d="M470.7 387.4l2.0 2.2"/><path d="M528.0 405.8l2.0 2.2"/><path d="M420.7 340.3l2.0 2.2"/><path d="M458.7 405.0l1.5 -2.2"/><path d="M480.0 331.9l2.8 1.8"/><path d="M417.1 398.4l1.5 -2.2"/><path d="M416.8 400.2l2.0 2.2"/><path d="M501.0 403.3l3.2 -1.6"/><path d="M531.0 423.6l3.2 -1.6"/><path d="M433.5 422.2l2.0 2.2"/><path d="M447.3 405.9l2.8 1.8"/><path d="M505.9 397.2l2.8 1.8"/><path d="M414.6 361.7l3.5 0.3"/><path d="M428.3 414.1l3.5 0.3"/><path d="M538.0 371.8l3.5 0.3"/><path d="M478.8 416.3l2.8 1.8"/><path d="M492.0 387.1l2.8 1.8"/><path d="M451.9 331.5l2.8 1.8"/><path d="M464.3 389.1l3.5 0.3"/><path d="M504.9 414.0l2.8 1.8"/><path d="M521.4 353.4l1.5 -2.2"/><path d="M412.1 410.4l2.0 2.2"/><path d="M486.6 383.7l3.2 -1.6"/><path d="M442.0 379.4l2.0 2.2"/><path d="M513.5 363.7l2.0 2.2"/><path d="M550.6 383.4l3.5 0.3"/><path d="M453.6 335.8l2.8 1.8"/><path d="M431.0 399.4l3.2 -1.6"/><path d="M448.6 377.5l3.5 0.3"/><path d="M499.0 422.5l1.5 -2.2"/><path d="M541.5 414.0l3.2 -1.6"/><path d="M514.8 349.3l3.5 0.3"/><path d="M495.6 369.5l1.5 -2.2"/><path d="M458.5 332.6l2.0 2.2"/><path d="M438.4 390.7l3.2 -1.6"/><path d="M413.0 382.4l3.5 0.3"/><path d="M420.6 362.3l2.8 1.8"/><path d="M465.7 356.9l2.8 1.8"/><path d="M435.0 387.9l2.0 2.2"/><path d="M428.3 329.4l2.8 1.8"/><path d="M509.0 371.3l3.2 -1.6"/><path d="M498.8 411.6l3.5 0.3"/><path d="M464.1 353.4l3.2 -1.6"/><path d="M413.3 406.8l3.5 0.3"/><path d="M492.4 383.5l1.5 -2.2"/><path d="M542.8 398.4l2.8 1.8"/><path d="M429.3 328.0l3.2 -1.6"/><path d="M483.1 367.0l2.8 1.8"/><path d="M428.4 415.5l3.2 -1.6"/><path d="M406.8 380.9l2.8 1.8"/><path d="M425.9 347.2l1.5 -2.2"/><path d="M499.5 390.2l2.0 2.2"/><path d="M524.6 344.8l3.5 0.3"/><path d="M414.4 388.1l2.0 2.2"/><path d="M510.2 328.6l2.0 2.2"/><path d="M514.5 372.7l2.0 2.2"/><path d="M430.8 423.7l3.5 0.3"/><path d="M439.1 331.7l3.5 0.3"/><path d="M536.0 416.8l3.5 0.3"/><path d="M509.6 353.5l1.5 -2.2"/><path d="M504.8 393.8l1.5 -2.2"/><path d="M547.9 356.4l2.8 1.8"/><path d="M417.6 376.7l2.8 1.8"/><path d="M443.3 350.7l2.8 1.8"/><path d="M543.9 399.6l3.5 0.3"/><path d="M433.2 365.3l1.5 -2.2"/><path d="M440.2 415.1l1.5 -2.2"/><path d="M474.0 408.6l3.2 -1.6"/><path d="M531.1 370.0l2.8 1.8"/><path d="M488.8 357.5l2.8 1.8"/><path d="M462.6 384.2l1.5 -2.2"/><path d="M538.9 341.9l3.2 -1.6"/><path d="M421.4 387.7l2.8 1.8"/><path d="M455.7 341.6l3.2 -1.6"/><path d="M409.5 341.3l3.2 -1.6"/><path d="M507.5 398.7l3.2 -1.6"/><path d="M530.9 401.1l2.8 1.8"/><path d="M525.2 406.7l3.2 -1.6"/><path d="M534.3 400.6l2.0 2.2"/><path d="M420.7 347.7l3.2 -1.6"/><path d="M410.0 419.1l3.2 -1.6"/><path d="M526.3 388.6l3.5 0.3"/><path d="M475.1 340.7l2.8 1.8"/><path d="M448.3 360.3l3.5 0.3"/><path d="M408.1 352.6l3.5 0.3"/><path d="M412.1 400.9l3.5 0.3"/><path d="M518.1 385.8l2.0 2.2"/><path d="M530.2 387.4l3.2 -1.6"/><path d="M521.0 331.0l1.5 -2.2"/><path d="M518.6 361.3l3.2 -1.6"/><path d="M484.1 348.8l3.2 -1.6"/><path d="M489.5 355.6l2.0 2.2"/><path d="M405.2 347.4l3.2 -1.6"/><path d="M405.6 375.1l2.0 2.2"/><path d="M507.2 407.2l2.0 2.2"/><path d="M492.1 419.9l1.5 -2.2"/><path d="M443.3 418.6l3.5 0.3"/><path d="M524.8 418.1l2.8 1.8"/><path d="M478.3 338.6l3.2 -1.6"/><path d="M477.1 423.1l1.5 -2.2"/><path d="M520.7 388.3l3.5 0.3"/><path d="M419.0 417.1l3.2 -1.6"/><path d="M467.1 390.0l3.5 0.3"/><path d="M435.3 353.3l1.5 -2.2"/><path d="M478.7 364.4l2.8 1.8"/><path d="M543.8 340.2l1.5 -2.2"/><path d="M515.9 400.3l3.2 -1.6"/><path d="M456.2 359.4l2.8 1.8"/><path d="M532.6 371.2l1.5 -2.2"/><path d="M514.1 344.3l2.0 2.2"/><path d="M506.3 352.7l2.8 1.8"/><path d="M423.5 372.4l2.8 1.8"/><path d="M479.6 353.7l1.5 -2.2"/><path d="M427.7 343.0l2.8 1.8"/><path d="M511.3 385.9l3.5 0.3"/><path d="M428.7 359.5l2.8 1.8"/><path d="M443.0 419.7l3.2 -1.6"/><path d="M429.2 391.2l2.8 1.8"/><path d="M461.5 422.4l3.5 0.3"/><path d="M512.8 369.8l2.8 1.8"/><path d="M421.1 415.5l3.5 0.3"/><path d="M435.3 365.3l3.2 -1.6"/><path d="M406.9 410.0l2.0 2.2"/><path d="M506.9 376.0l3.5 0.3"/><path d="M473.1 341.6l1.5 -2.2"/><path d="M513.5 328.5l2.8 1.8"/><path d="M538.5 369.3l1.5 -2.2"/><path d="M491.4 390.1l2.8 1.8"/><path d="M503.2 390.6l1.5 -2.2"/><path d="M530.3 393.2l3.2 -1.6"/><path d="M471.7 358.0l3.2 -1.6"/><path d="M536.5 351.3l2.0 2.2"/><path d="M509.8 388.4l3.5 0.3"/><path d="M529.9 374.3l3.2 -1.6"/><path d="M496.4 367.3l2.8 1.8"/><path d="M536.5 359.5l3.2 -1.6"/><path d="M462.1 375.0l3.2 -1.6"/><path d="M410.6 380.2l2.8 1.8"/><path d="M510.3 419.3l2.8 1.8"/><path d="M481.3 337.7l1.5 -2.2"/><path d="M472.1 347.7l2.0 2.2"/><path d="M480.3 389.4l3.5 0.3"/><path d="M481.7 367.4l2.0 2.2"/><path d="M435.9 393.7l2.0 2.2"/><path d="M480.5 417.5l1.5 -2.2"/><path d="M457.3 333.4l3.5 0.3"/><path d="M461.1 333.9l3.2 -1.6"/><path d="M466.5 368.4l3.5 0.3"/><path d="M490.3 338.5l3.5 0.3"/><path d="M514.0 418.2l1.5 -2.2"/><path d="M547.8 423.4l2.0 2.2"/><path d="M472.9 343.8l3.2 -1.6"/><path d="M524.0 388.9l2.0 2.2"/><path d="M499.4 397.2l2.8 1.8"/><path d="M456.9 389.3l2.0 2.2"/><path d="M473.8 356.3l1.5 -2.2"/><path d="M500.5 402.9l2.0 2.2"/><path d="M457.1 409.7l3.5 0.3"/><path d="M508.5 394.0l2.0 2.2"/><path d="M504.8 374.2l3.5 0.3"/><path d="M457.6 390.8l3.5 0.3"/><path d="M475.5 369.1l3.2 -1.6"/><path d="M501.9 362.8l3.5 0.3"/><path d="M530.6 333.5l1.5 -2.2"/><path d="M538.2 403.3l2.8 1.8"/><path d="M483.0 361.1l1.5 -2.2"/><path d="M407.2 329.1l3.2 -1.6"/><path d="M501.4 352.0l3.2 -1.6"/><path d="M490.0 410.0l2.8 1.8"/><path d="M519.1 361.3l2.8 1.8"/><path d="M435.7 366.6l1.5 -2.2"/><path d="M429.7 413.5l1.5 -2.2"/><path d="M548.6 336.7l1.5 -2.2"/><path d="M520.8 408.5l2.8 1.8"/><path d="M477.7 348.5l3.2 -1.6"/><path d="M514.1 370.1l3.2 -1.6"/><path d="M486.6 353.4l2.8 1.8"/><path d="M526.6 373.4l1.5 -2.2"/><path d="M413.6 372.8l2.8 1.8"/><path d="M508.0 351.7l2.8 1.8"/><path d="M484.3 410.8l3.2 -1.6"/><path d="M428.6 358.8l1.5 -2.2"/><path d="M478.1 356.5l2.0 2.2"/><path d="M460.1 368.2l3.2 -1.6"/><path d="M431.5 362.6l3.2 -1.6"/><path d="M408.0 332.4l3.5 0.3"/><path d="M523.9 337.0l2.0 2.2"/><path d="M476.2 414.2l3.2 -1.6"/><path d="M436.4 367.9l2.8 1.8"/><path d="M454.8 410.7l3.5 0.3"/><path d="M455.2 402.7l1.5 -2.2"/><path d="M518.3 348.2l2.0 2.2"/><path d="M455.3 352.2l3.2 -1.6"/><path d="M526.5 356.1l2.0 2.2"/><path d="M464.3 376.4l3.5 0.3"/><path d="M533.3 361.1l2.8 1.8"/><path d="M501.2 404.0l3.5 0.3"/><path d="M433.3 396.5l2.8 1.8"/><path d="M491.2 388.9l3.2 -1.6"/><path d="M463.6 381.2l2.0 2.2"/><path d="M485.2 332.8l3.5 0.3"/><path d="M420.9 332.5l2.0 2.2"/><path d="M494.5 391.2l1.5 -2.2"/><path d="M538.7 386.7l1.5 -2.2"/><path d="M426.6 392.7l1.5 -2.2"/><path d="M533.8 336.0l3.2 -1.6"/><path d="M503.0 372.0l2.8 1.8"/><path d="M419.9 345.4l3.2 -1.6"/><path d="M467.0 337.7l3.2 -1.6"/><path d="M459.2 407.0l3.5 0.3"/><path d="M487.6 352.8l3.5 0.3"/><path d="M432.2 331.3l3.2 -1.6"/><path d="M468.3 389.6l3.2 -1.6"/><path d="M478.2 378.1l3.2 -1.6"/><path d="M518.7 368.4l2.0 2.2"/><path d="M470.6 329.4l2.0 2.2"/><path d="M492.3 423.3l2.8 1.8"/><path d="M474.9 367.6l3.2 -1.6"/><path d="M417.2 373.3l2.8 1.8"/><path d="M497.2 369.0l3.2 -1.6"/><path d="M505.5 339.7l3.2 -1.6"/><path d="M437.1 339.6l2.0 2.2"/><path d="M407.6 397.1l2.8 1.8"/><path d="M471.3 399.4l3.2 -1.6"/><path d="M458.8 399.7l2.8 1.8"/><path d="M512.3 336.1l1.5 -2.2"/><path d="M509.3 372.2l3.5 0.3"/><path d="M539.3 333.1l3.2 -1.6"/><path d="M406.7 329.4l1.5 -2.2"/><path d="M416.7 357.9l1.5 -2.2"/><path d="M429.4 410.7l2.0 2.2"/><path d="M494.5 358.4l1.5 -2.2"/><path d="M512.0 373.1l2.8 1.8"/><path d="M426.3 404.5l3.5 0.3"/><path d="M545.2 343.7l2.0 2.2"/><path d="M475.1 402.7l2.0 2.2"/><path d="M543.9 403.3l1.5 -2.2"/><path d="M454.1 354.9l1.5 -2.2"/><path d="M548.2 395.5l1.5 -2.2"/><path d="M453.8 386.2l3.2 -1.6"/><path d="M527.2 385.7l3.5 0.3"/><path d="M490.9 421.7l2.8 1.8"/><path d="M460.4 393.7l1.5 -2.2"/><path d="M518.4 350.5l2.0 2.2"/><path d="M446.6 328.2l3.5 0.3"/><path d="M444.4 343.1l3.2 -1.6"/><path d="M447.4 341.5l1.5 -2.2"/><path d="M426.6 421.6l1.5 -2.2"/><path d="M505.6 415.7l3.5 0.3"/><path d="M483.6 379.8l2.0 2.2"/><path d="M522.2 347.2l2.8 1.8"/><path d="M450.5 333.5l2.0 2.2"/><path d="M473.4 347.8l3.5 0.3"/><path d="M491.2 328.9l2.0 2.2"/><path d="M472.6 336.4l3.5 0.3"/><path d="M518.5 350.4l1.5 -2.2"/><path d="M481.6 352.9l1.5 -2.2"/><path d="M452.2 376.6l2.8 1.8"/><path d="M432.8 346.5l2.8 1.8"/><path d="M523.5 355.8l1.5 -2.2"/><path d="M488.0 366.6l1.5 -2.2"/><path d="M531.0 351.6l2.0 2.2"/><path d="M460.0 338.2l2.0 2.2"/><path d="M520.7 343.0l1.5 -2.2"/><path d="M409.5 354.9l1.5 -2.2"/><path d="M408.0 331.2l1.5 -2.2"/><path d="M476.5 382.4l3.5 0.3"/><path d="M541.0 354.9l3.2 -1.6"/><path d="M544.1 401.7l1.5 -2.2"/><path d="M546.6 352.4l3.2 -1.6"/><path d="M454.8 423.5l2.0 2.2"/><path d="M417.3 332.9l1.5 -2.2"/><path d="M459.3 395.7l2.0 2.2"/><path d="M544.2 415.4l3.2 -1.6"/><path d="M531.9 389.4l3.2 -1.6"/><path d="M508.8 336.6l3.5 0.3"/><path d="M488.0 389.5l1.5 -2.2"/><path d="M462.8 371.0l2.8 1.8"/><path d="M459.5 350.6l2.8 1.8"/><path d="M430.3 418.4l3.5 0.3"/><path d="M413.7 381.1l3.2 -1.6"/><path d="M528.1 332.5l1.5 -2.2"/><path d="M509.3 390.1l2.0 2.2"/><path d="M413.2 341.9l3.2 -1.6"/><path d="M543.1 393.0l3.5 0.3"/><path d="M491.7 370.4l3.2 -1.6"/><path d="M474.2 363.7l2.0 2.2"/><path d="M423.2 374.2l2.8 1.8"/><path d="M469.9 405.5l3.2 -1.6"/><path d="M473.8 415.6l3.2 -1.6"/><path d="M428.1 408.0l3.2 -1.6"/><path d="M542.3 411.2l2.8 1.8"/><path d="M519.4 420.0l2.0 2.2"/><path d="M528.8 388.3l2.0 2.2"/><path d="M547.9 359.0l2.8 1.8"/><path d="M475.2 388.3l2.8 1.8"/><path d="M453.8 398.7l2.8 1.8"/><path d="M509.9 381.1l2.8 1.8"/><path d="M469.5 342.3l2.0 2.2"/><path d="M465.5 342.9l3.5 0.3"/><path d="M488.9 356.5l2.8 1.8"/><path d="M443.3 338.5l2.0 2.2"/><path d="M537.8 339.0l1.5 -2.2"/><path d="M413.4 413.9l2.8 1.8"/><path d="M487.3 408.2l3.2 -1.6"/><path d="M442.9 347.4l3.5 0.3"/><path d="M468.5 353.1l2.8 1.8"/><path d="M541.0 337.4l3.5 0.3"/><path d="M466.1 343.6l3.5 0.3"/><path d="M426.2 389.4l2.0 2.2"/><path d="M523.6 360.7l2.8 1.8"/><path d="M470.1 403.8l1.5 -2.2"/><path d="M447.1 362.6l3.2 -1.6"/><path d="M539.1 349.0l1.5 -2.2"/><path d="M431.6 409.0l1.5 -2.2"/><path d="M518.3 396.3l2.8 1.8"/><path d="M493.3 407.6l1.5 -2.2"/><path d="M512.4 401.1l2.8 1.8"/><path d="M435.3 386.8l2.8 1.8"/><path d="M490.7 347.4l3.2 -1.6"/><path d="M506.8 377.9l3.2 -1.6"/><path d="M481.2 361.4l3.5 0.3"/><path d="M528.8 411.0l2.0 2.2"/><path d="M418.3 367.3l2.0 2.2"/><path d="M424.6 391.9l2.8 1.8"/><path d="M432.3 407.8l3.5 0.3"/><path d="M410.4 395.4l1.5 -2.2"/><path d="M492.4 328.4l1.5 -2.2"/><path d="M542.0 421.0l3.2 -1.6"/><path d="M422.8 396.6l3.5 0.3"/><path d="M519.5 411.3l1.5 -2.2"/><path d="M515.4 333.9l3.2 -1.6"/><path d="M545.2 375.5l1.5 -2.2"/><path d="M408.8 405.2l2.8 1.8"/><path d="M408.0 420.9l2.8 1.8"/><path d="M496.0 344.1l3.5 0.3"/><path d="M441.8 406.4l3.2 -1.6"/><path d="M407.9 416.9l2.8 1.8"/><path d="M443.4 408.4l1.5 -2.2"/><path d="M473.2 350.9l2.0 2.2"/><path d="M420.1 411.5l2.8 1.8"/><path d="M411.6 339.8l2.0 2.2"/><path d="M491.1 401.1l3.2 -1.6"/><path d="M422.9 366.9l2.8 1.8"/><path d="M484.6 349.8l2.8 1.8"/><path d="M426.6 383.0l2.0 2.2"/><path d="M429.2 407.3l2.0 2.2"/><path d="M507.0 385.3l1.5 -2.2"/><path d="M482.3 366.0l3.2 -1.6"/><path d="M519.2 360.5l2.8 1.8"/><path d="M528.3 396.7l1.5 -2.2"/><path d="M523.2 415.6l2.0 2.2"/><path d="M529.6 333.1l1.5 -2.2"/><path d="M426.6 393.3l3.5 0.3"/><path d="M441.6 368.5l3.2 -1.6"/><path d="M458.6 379.0l3.2 -1.6"/><path d="M452.7 347.3l3.2 -1.6"/><path d="M438.1 368.4l2.0 2.2"/><path d="M519.2 417.9l3.2 -1.6"/><path d="M524.0 412.9l3.2 -1.6"/><path d="M410.1 389.6l3.5 0.3"/><path d="M539.9 387.9l1.5 -2.2"/><path d="M523.5 331.4l3.2 -1.6"/><path d="M441.8 377.9l2.0 2.2"/><path d="M439.8 331.8l3.2 -1.6"/><path d="M449.9 390.2l3.2 -1.6"/><path d="M413.9 420.1l1.5 -2.2"/><path d="M537.5 336.1l1.5 -2.2"/><path d="M483.5 342.2l3.2 -1.6"/><path d="M480.2 413.0l2.0 2.2"/><path d="M489.9 354.3l3.2 -1.6"/><path d="M513.8 355.6l2.0 2.2"/><path d="M494.7 382.7l2.0 2.2"/><path d="M434.6 396.2l2.0 2.2"/><path d="M536.1 357.2l2.0 2.2"/><path d="M473.9 357.8l2.8 1.8"/><path d="M454.0 346.1l1.5 -2.2"/><path d="M461.3 384.2l3.2 -1.6"/><path d="M540.9 343.6l2.8 1.8"/><path d="M452.6 359.2l3.5 0.3"/><path d="M446.9 422.8l3.5 0.3"/><path d="M413.4 330.1l1.5 -2.2"/><path d="M414.8 411.6l2.0 2.2"/><path d="M501.7 377.6l2.0 2.2"/><path d="M457.1 401.2l1.5 -2.2"/><path d="M438.1 420.1l2.8 1.8"/><path d="M466.3 392.2l2.8 1.8"/><path d="M504.3 387.2l3.5 0.3"/><path d="M525.7 377.7l2.0 2.2"/><path d="M444.5 388.5l2.8 1.8"/><path d="M465.7 337.9l2.0 2.2"/><path d="M517.6 384.2l2.0 2.2"/><path d="M463.4 423.3l2.8 1.8"/><path d="M466.4 403.2l1.5 -2.2"/><path d="M494.3 364.4l2.0 2.2"/><path d="M506.8 355.7l3.5 0.3"/><path d="M448.1 365.5l1.5 -2.2"/><path d="M492.5 390.2l3.2 -1.6"/><path d="M520.7 409.6l2.0 2.2"/><path d="M461.0 356.8l1.5 -2.2"/><path d="M449.7 341.9l1.5 -2.2"/><path d="M460.4 350.3l3.5 0.3"/><path d="M452.6 409.0l2.8 1.8"/><path d="M545.9 347.6l2.0 2.2"/><path d="M536.0 419.8l3.2 -1.6"/><path d="M412.0 382.2l2.0 2.2"/><path d="M449.1 379.5l3.5 0.3"/><path d="M484.2 423.8l1.5 -2.2"/><path d="M526.4 397.8l2.0 2.2"/><path d="M462.3 362.3l1.5 -2.2"/><path d="M504.4 371.5l3.2 -1.6"/><path d="M504.4 378.4l3.2 -1.6"/><path d="M465.2 376.1l1.5 -2.2"/><path d="M541.5 342.8l2.8 1.8"/><path d="M546.8 374.7l2.0 2.2"/><path d="M517.8 414.3l1.5 -2.2"/><path d="M455.5 378.9l3.2 -1.6"/><path d="M430.1 358.5l3.2 -1.6"/><path d="M526.4 377.2l3.2 -1.6"/><path d="M501.4 356.3l3.5 0.3"/><path d="M525.6 423.1l2.0 2.2"/><path d="M497.8 378.3l1.5 -2.2"/><path d="M435.5 413.7l2.0 2.2"/><path d="M431.8 388.5l1.5 -2.2"/><path d="M420.7 382.7l3.2 -1.6"/><path d="M506.7 329.0l3.2 -1.6"/><path d="M450.1 394.3l3.2 -1.6"/><path d="M539.8 366.2l3.2 -1.6"/><path d="M491.2 392.1l2.8 1.8"/><path d="M430.8 401.8l1.5 -2.2"/><path d="M444.1 390.1l1.5 -2.2"/><path d="M480.6 341.8l2.8 1.8"/><path d="M465.4 339.7l2.8 1.8"/><path d="M481.2 376.9l3.2 -1.6"/><path d="M419.7 344.4l1.5 -2.2"/><path d="M477.1 372.9l2.0 2.2"/><path d="M523.6 334.0l3.2 -1.6"/><path d="M505.6 383.6l2.8 1.8"/><path d="M510.2 362.0l2.8 1.8"/><path d="M409.8 388.4l1.5 -2.2"/><path d="M414.3 346.4l1.5 -2.2"/><path d="M461.7 333.2l2.0 2.2"/><path d="M490.7 420.1l2.0 2.2"/><path d="M413.0 350.9l2.8 1.8"/><path d="M411.5 417.4l2.8 1.8"/><path d="M451.3 414.3l2.0 2.2"/><path d="M449.6 385.8l2.0 2.2"/><path d="M549.0 334.5l2.0 2.2"/><path d="M504.2 384.1l2.0 2.2"/><path d="M450.4 412.0l2.0 2.2"/><path d="M408.3 411.3l3.2 -1.6"/><path d="M430.5 362.4l2.8 1.8"/><path d="M406.1 412.7l2.0 2.2"/><path d="M487.5 339.0l1.5 -2.2"/><path d="M533.1 360.2l3.2 -1.6"/><path d="M546.3 368.5l3.5 0.3"/><path d="M486.4 365.2l2.0 2.2"/><path d="M446.7 350.8l3.2 -1.6"/><path d="M446.0 330.4l2.8 1.8"/><path d="M440.5 340.5l2.8 1.8"/><path d="M444.6 408.2l2.8 1.8"/><path d="M486.6 372.8l2.8 1.8"/><path d="M428.4 361.9l2.0 2.2"/><path d="M460.4 420.0l2.8 1.8"/><path d="M448.7 373.7l2.8 1.8"/><path d="M438.4 371.5l2.8 1.8"/><path d="M543.5 423.8l1.5 -2.2"/><path d="M537.2 384.4l3.5 0.3"/><path d="M483.6 366.8l1.5 -2.2"/><path d="M436.2 411.7l3.2 -1.6"/><path d="M504.6 336.8l3.5 0.3"/><path d="M513.2 401.4l3.2 -1.6"/><path d="M501.7 382.5l3.5 0.3"/><path d="M407.2 396.2l2.8 1.8"/><path d="M519.1 350.2l2.8 1.8"/><path d="M502.4 338.5l1.5 -2.2"/><path d="M539.3 405.3l3.5 0.3"/><path d="M433.3 397.0l3.2 -1.6"/><path d="M438.3 340.1l2.0 2.2"/><path d="M446.5 366.7l2.0 2.2"/><path d="M518.9 412.7l2.8 1.8"/><path d="M542.7 344.9l3.5 0.3"/><path d="M504.9 391.7l3.5 0.3"/><path d="M536.9 330.4l2.0 2.2"/><path d="M441.5 409.3l3.5 0.3"/><path d="M538.2 337.4l3.5 0.3"/><path d="M421.9 415.6l2.8 1.8"/><path d="M509.8 331.9l3.2 -1.6"/><path d="M494.5 369.3l3.5 0.3"/><path d="M428.0 398.9l1.5 -2.2"/><path d="M450.7 389.3l2.8 1.8"/><path d="M488.0 349.9l2.0 2.2"/><path d="M510.3 352.5l2.0 2.2"/><path d="M503.5 383.2l3.2 -1.6"/><path d="M421.4 401.3l3.5 0.3"/><path d="M537.5 412.0l1.5 -2.2"/><path d="M494.3 332.5l2.8 1.8"/><path d="M505.1 331.6l3.5 0.3"/><path d="M435.9 415.8l3.2 -1.6"/><path d="M466.3 399.4l1.5 -2.2"/><path d="M526.8 355.0l3.2 -1.6"/><path d="M456.3 419.2l2.0 2.2"/><path d="M541.7 394.4l2.0 2.2"/><path d="M479.8 393.0l2.8 1.8"/><path d="M468.0 377.1l2.8 1.8"/><path d="M477.0 346.2l1.5 -2.2"/><path d="M443.4 380.5l2.8 1.8"/><path d="M485.0 352.0l3.2 -1.6"/><path d="M429.7 361.3l3.2 -1.6"/><path d="M434.6 357.8l2.8 1.8"/><path d="M505.9 374.7l2.0 2.2"/><path d="M440.0 351.2l1.5 -2.2"/><path d="M506.7 340.8l3.5 0.3"/><path d="M507.6 340.8l2.8 1.8"/><path d="M491.4 351.1l3.2 -1.6"/><path d="M485.6 401.0l2.8 1.8"/><path d="M504.5 342.9l2.0 2.2"/><path d="M528.4 367.0l2.8 1.8"/><path d="M421.8 355.8l3.5 0.3"/><path d="M476.5 332.2l3.5 0.3"/><path d="M449.7 338.6l3.5 0.3"/><path d="M470.9 338.8l3.5 0.3"/><path d="M470.4 382.6l3.5 0.3"/><path d="M429.7 334.9l3.2 -1.6"/><path d="M473.9 422.1l2.0 2.2"/><path d="M417.3 396.8l1.5 -2.2"/><path d="M443.9 389.9l2.0 2.2"/><path d="M476.8 403.3l3.5 0.3"/><path d="M406.2 416.3l3.5 0.3"/><path d="M497.3 417.8l3.5 0.3"/><path d="M501.0 335.5l3.2 -1.6"/><path d="M408.7 365.9l2.8 1.8"/><path d="M448.6 345.8l1.5 -2.2"/><path d="M529.3 417.0l2.8 1.8"/><path d="M420.0 397.0l3.5 0.3"/><path d="M514.1 359.4l2.8 1.8"/><path d="M500.2 362.2l2.8 1.8"/><path d="M459.2 380.9l3.5 0.3"/><path d="M528.2 352.3l3.2 -1.6"/><path d="M411.1 382.4l2.0 2.2"/><path d="M538.1 418.7l2.0 2.2"/><path d="M467.2 398.2l3.5 0.3"/><path d="M493.6 388.1l2.8 1.8"/><path d="M506.1 343.7l2.0 2.2"/><path d="M498.6 366.5l3.2 -1.6"/><path d="M530.0 374.0l2.8 1.8"/><path d="M511.3 328.3l1.5 -2.2"/><path d="M530.7 403.5l2.0 2.2"/><path d="M426.0 334.9l3.2 -1.6"/><path d="M480.6 368.4l3.5 0.3"/><path d="M414.2 328.8l2.8 1.8"/><path d="M537.9 343.8l3.5 0.3"/><path d="M405.6 405.2l3.5 0.3"/><path d="M488.4 373.0l1.5 -2.2"/><path d="M452.6 372.2l1.5 -2.2"/><path d="M538.6 411.1l2.0 2.2"/><path d="M546.4 387.5l3.2 -1.6"/><path d="M511.2 359.8l3.5 0.3"/><path d="M488.1 368.4l3.5 0.3"/><path d="M475.7 390.1l3.5 0.3"/><path d="M532.2 378.9l3.2 -1.6"/><path d="M529.7 349.4l2.0 2.2"/><path d="M506.6 342.1l1.5 -2.2"/><path d="M459.7 383.8l2.0 2.2"/><path d="M457.9 351.1l2.0 2.2"/><path d="M463.3 339.0l2.8 1.8"/><path d="M547.4 347.5l3.2 -1.6"/><path d="M437.5 408.4l3.2 -1.6"/><path d="M432.6 392.3l2.0 2.2"/><path d="M438.4 372.0l1.5 -2.2"/><path d="M489.2 338.8l1.5 -2.2"/><path d="M538.7 382.4l2.0 2.2"/><path d="M504.9 404.8l2.8 1.8"/><path d="M531.9 380.9l3.2 -1.6"/><path d="M497.1 420.2l1.5 -2.2"/><path d="M420.0 407.7l2.0 2.2"/><path d="M485.0 420.9l2.8 1.8"/><path d="M487.8 402.4l2.8 1.8"/><path d="M459.9 387.4l2.0 2.2"/><path d="M439.8 363.7l3.2 -1.6"/><path d="M508.2 419.7l2.0 2.2"/><path d="M449.1 395.9l2.0 2.2"/><path d="M538.6 336.4l2.8 1.8"/><path d="M487.8 416.1l3.5 0.3"/><path d="M429.7 399.6l3.5 0.3"/><path d="M523.2 398.7l3.2 -1.6"/><path d="M526.4 339.8l3.5 0.3"/><path d="M480.4 378.4l3.5 0.3"/><path d="M511.1 332.2l1.5 -2.2"/><path d="M457.0 362.2l3.5 0.3"/><path d="M523.0 338.8l2.8 1.8"/><path d="M442.4 346.5l2.0 2.2"/><path d="M408.1 422.9l2.0 2.2"/><path d="M421.7 330.0l3.2 -1.6"/><path d="M415.8 352.8l2.8 1.8"/><path d="M486.5 355.8l2.0 2.2"/><path d="M527.9 384.5l3.5 0.3"/><path d="M484.1 394.2l3.5 0.3"/></g><use href="#facp" fill="url(#fac)"/><g clip-path="url(#facclip)"><path d="M296,320 L296,288 L352.4,263.5 L392,322 L392,346 L320,346 Z" fill="#7f99ad" opacity="0.85"/><path d="M75,213 L104.6,247 L140,276 L140,300 L75,300 Z" fill="#8a9aa0" opacity="0.55"/><g filter="url(#blur2)"><ellipse cx="83.2779" cy="246.3" rx="11" ry="10.5" fill="#4a6474" opacity="0.95"/><ellipse cx="111.298" cy="246.3" rx="11" ry="8.5" fill="#4a6474" opacity="0.7"/><ellipse cx="145.472" cy="246.3" rx="14.5" ry="9.5" fill="#3b566a" opacity="0.7"/><ellipse cx="175.844" cy="246.3" rx="12.5" ry="8.5" fill="#4a6474" opacity="0.7"/><ellipse cx="208.457" cy="246.3" rx="13.5" ry="9.5" fill="#3b566a" opacity="0.9"/><ellipse cx="240.709" cy="246.3" rx="12.5" ry="10.5" fill="#2c4960" opacity="0.9"/><ellipse cx="270.757" cy="246.3" rx="14.5" ry="10.5" fill="#274257" opacity="0.7"/><ellipse cx="301.282" cy="246.3" rx="13.5" ry="9.5" fill="#274257" opacity="0.7"/><ellipse cx="333.991" cy="246.3" rx="12.5" ry="9.5" fill="#4a6474" opacity="0.95"/><ellipse cx="366.876" cy="246.3" rx="13.5" ry="10.5" fill="#274257" opacity="0.95"/><ellipse cx="399.79" cy="246.3" rx="11" ry="8.5" fill="#3b566a" opacity="0.9"/><ellipse cx="430.538" cy="246.3" rx="13" ry="9.5" fill="#5c6d6c" opacity="0.25"/><ellipse cx="462.425" cy="246.3" rx="9" ry="6.5" fill="#274257" opacity="0.4"/><ellipse cx="493.436" cy="246.3" rx="13" ry="8" fill="#274257" opacity="0.4"/><ellipse cx="525.963" cy="246.3" rx="11" ry="9.5" fill="#50666c" opacity="0.55"/><ellipse cx="557.487" cy="246.3" rx="13" ry="8" fill="#274257" opacity="0.75"/><ellipse cx="82.5369" cy="274.5" rx="13.5" ry="9.5" fill="#5c6d6c" opacity="0.7"/><ellipse cx="111.029" cy="274.5" rx="12.5" ry="9.5" fill="#274257" opacity="0.9"/><ellipse cx="144.284" cy="274.5" rx="14.5" ry="11.5" fill="#5c6d6c" opacity="0.7"/><ellipse cx="174.975" cy="274.5" rx="12.5" ry="8.5" fill="#5c6d6c" opacity="0.8"/><ellipse cx="206.394" cy="274.5" rx="13.5" ry="10.5" fill="#50666c" opacity="0.8"/><ellipse cx="240.122" cy="274.5" rx="12.5" ry="10.5" fill="#35546a" opacity="0.95"/><ellipse cx="272.854" cy="274.5" rx="14.5" ry="8.5" fill="#4a6474" opacity="0.8"/><ellipse cx="303.386" cy="274.5" rx="13.5" ry="10.5" fill="#274257" opacity="0.9"/><ellipse cx="335.718" cy="274.5" rx="13.5" ry="9.5" fill="#5c6d6c" opacity="0.9"/><ellipse cx="365.401" cy="274.5" rx="14.5" ry="11.5" fill="#35546a" opacity="0.95"/><ellipse cx="397.267" cy="274.5" rx="11" ry="9.5" fill="#3b566a" opacity="0.8"/><ellipse cx="428.317" cy="274.5" rx="13" ry="6.5" fill="#2c4960" opacity="0.55"/><ellipse cx="459.72" cy="274.5" rx="13" ry="6.5" fill="#5c6d6c" opacity="0.4"/><ellipse cx="495.092" cy="274.5" rx="13" ry="8" fill="#274257" opacity="0.75"/><ellipse cx="523.208" cy="274.5" rx="11" ry="9.5" fill="#35546a" opacity="0.4"/><ellipse cx="558.002" cy="274.5" rx="13" ry="9.5" fill="#4a6474" opacity="0.25"/><ellipse cx="79.6488" cy="302.7" rx="14.5" ry="8.5" fill="#35546a" opacity="0.95"/><ellipse cx="113" cy="302.7" rx="14.5" ry="12" fill="#33474f" opacity="0.9"/><ellipse cx="143.728" cy="302.7" rx="14.5" ry="11.5" fill="#3b566a" opacity="0.8"/><ellipse cx="176.657" cy="302.7" rx="11" ry="10.5" fill="#4a6474" opacity="0.95"/><ellipse cx="206.727" cy="302.7" rx="14.5" ry="10.5" fill="#274257" opacity="0.95"/><ellipse cx="239.918" cy="302.7" rx="12.5" ry="9.5" fill="#2c4960" opacity="0.9"/><ellipse cx="271.193" cy="302.7" rx="13.5" ry="10.5" fill="#5c6d6c" opacity="0.95"/><ellipse cx="304.164" cy="302.7" rx="13.5" ry="9.5" fill="#3b566a" opacity="0.9"/><ellipse cx="335.507" cy="302.7" rx="11" ry="10.5" fill="#274257" opacity="0.7"/><ellipse cx="366.693" cy="302.7" rx="13.5" ry="10.5" fill="#3b566a" opacity="0.7"/><ellipse cx="398.533" cy="302.7" rx="13.5" ry="8.5" fill="#274257" opacity="0.9"/><ellipse cx="428.913" cy="302.7" rx="9" ry="9.5" fill="#2c4960" opacity="0.4"/><ellipse cx="460.237" cy="302.7" rx="9" ry="9.5" fill="#5c6d6c" opacity="0.75"/><ellipse cx="492.436" cy="302.7" rx="13" ry="6.5" fill="#2c4960" opacity="0.55"/><ellipse cx="526.711" cy="302.7" rx="13" ry="6.5" fill="#3b566a" opacity="0.4"/><ellipse cx="556.203" cy="302.7" rx="13" ry="6.5" fill="#5c6d6c" opacity="0.55"/><ellipse cx="81.3" cy="330.9" rx="14.5" ry="12" fill="#33474f" opacity="0.9"/><ellipse cx="111.853" cy="330.9" rx="14.5" ry="11.5" fill="#50666c" opacity="0.9"/><ellipse cx="144.7" cy="330.9" rx="14.5" ry="12" fill="#33474f" opacity="0.9"/><ellipse cx="175.695" cy="330.9" rx="14.5" ry="9.5" fill="#274257" opacity="0.7"/><ellipse cx="208.1" cy="330.9" rx="14.5" ry="12" fill="#33474f" opacity="0.9"/><ellipse cx="241.027" cy="330.9" rx="11" ry="8.5" fill="#2c4960" opacity="0.95"/><ellipse cx="271.757" cy="330.9" rx="11" ry="9.5" fill="#4a6474" opacity="0.8"/><ellipse cx="303.2" cy="330.9" rx="14.5" ry="12" fill="#33474f" opacity="0.9"/><ellipse cx="333.908" cy="330.9" rx="12.5" ry="8.5" fill="#4a6474" opacity="0.7"/><ellipse cx="366.017" cy="330.9" rx="12.5" ry="9.5" fill="#274257" opacity="0.7"/><ellipse cx="399.818" cy="330.9" rx="13.5" ry="10.5" fill="#274257" opacity="0.7"/><ellipse cx="429.909" cy="330.9" rx="13" ry="6.5" fill="#4a6474" opacity="0.55"/><ellipse cx="460.83" cy="330.9" rx="9" ry="8" fill="#5c6d6c" opacity="0.4"/><ellipse cx="492.046" cy="330.9" rx="11" ry="6.5" fill="#274257" opacity="0.75"/><ellipse cx="523.309" cy="330.9" rx="9" ry="9.5" fill="#50666c" opacity="0.25"/><ellipse cx="554.985" cy="330.9" rx="13" ry="8" fill="#5c6d6c" opacity="0.55"/><ellipse cx="82.7559" cy="359.1" rx="12.5" ry="11.5" fill="#5c6d6c" opacity="0.7"/><ellipse cx="113" cy="359.1" rx="14.5" ry="12" fill="#33474f" opacity="0.9"/><ellipse cx="146.597" cy="359.1" rx="11" ry="9.5" fill="#274257" opacity="0.95"/><ellipse cx="176.4" cy="359.1" rx="14.5" ry="12" fill="#33474f" opacity="0.9"/><ellipse cx="208.111" cy="359.1" rx="13.5" ry="9.5" fill="#2c4960" opacity="0.9"/><ellipse cx="239.8" cy="359.1" rx="14.5" ry="12" fill="#33474f" opacity="0.9"/><ellipse cx="271.5" cy="359.1" rx="14.5" ry="12" fill="#33474f" opacity="0.9"/><ellipse cx="303.931" cy="359.1" rx="12.5" ry="11.5" fill="#274257" opacity="0.95"/><ellipse cx="336.428" cy="359.1" rx="13.5" ry="11.5" fill="#2c4960" opacity="0.7"/><ellipse cx="366.6" cy="359.1" rx="14.5" ry="12" fill="#33474f" opacity="0.9"/><ellipse cx="396.451" cy="359.1" rx="12.5" ry="8.5" fill="#2c4960" opacity="0.9"/><ellipse cx="430.794" cy="359.1" rx="13" ry="8" fill="#3b566a" opacity="0.55"/><ellipse cx="459.958" cy="359.1" rx="9" ry="8" fill="#50666c" opacity="0.75"/><ellipse cx="493.502" cy="359.1" rx="11" ry="6.5" fill="#2c4960" opacity="0.75"/><ellipse cx="525.262" cy="359.1" rx="9" ry="9.5" fill="#2c4960" opacity="0.55"/><ellipse cx="558.158" cy="359.1" rx="13" ry="8" fill="#50666c" opacity="0.75"/><ellipse cx="81.3" cy="387.3" rx="14.5" ry="12" fill="#33474f" opacity="0.9"/><ellipse cx="113.926" cy="387.3" rx="12.5" ry="9.5" fill="#2c4960" opacity="0.8"/><ellipse cx="144.7" cy="387.3" rx="14.5" ry="12" fill="#33474f" opacity="0.9"/><ellipse cx="175.476" cy="387.3" rx="11" ry="10.5" fill="#274257" opacity="0.9"/><ellipse cx="209.258" cy="387.3" rx="11" ry="11.5" fill="#2c4960" opacity="0.9"/><ellipse cx="239.8" cy="387.3" rx="14.5" ry="12" fill="#33474f" opacity="0.9"/><ellipse cx="272.253" cy="387.3" rx="11" ry="10.5" fill="#274257" opacity="0.8"/><ellipse cx="303.961" cy="387.3" rx="13.5" ry="10.5" fill="#50666c" opacity="0.7"/><ellipse cx="334.9" cy="387.3" rx="14.5" ry="12" fill="#33474f" opacity="0.9"/><ellipse cx="365.873" cy="387.3" rx="14.5" ry="11.5" fill="#5c6d6c" opacity="0.8"/><ellipse cx="399.344" cy="387.3" rx="12.5" ry="11.5" fill="#4a6474" opacity="0.7"/><ellipse cx="428.956" cy="387.3" rx="13" ry="6.5" fill="#4a6474" opacity="0.55"/><ellipse cx="462.62" cy="387.3" rx="13" ry="9.5" fill="#3b566a" opacity="0.4"/><ellipse cx="491.747" cy="387.3" rx="13" ry="6.5" fill="#35546a" opacity="0.55"/><ellipse cx="524.723" cy="387.3" rx="13" ry="6.5" fill="#3b566a" opacity="0.75"/><ellipse cx="556.57" cy="387.3" rx="13" ry="9.5" fill="#3b566a" opacity="0.4"/><ellipse cx="81.1939" cy="415.5" rx="14.5" ry="8.5" fill="#50666c" opacity="0.8"/><ellipse cx="113" cy="415.5" rx="14.5" ry="12" fill="#33474f" opacity="0.9"/><ellipse cx="143.638" cy="415.5" rx="13.5" ry="11.5" fill="#50666c" opacity="0.7"/><ellipse cx="175.974" cy="415.5" rx="13.5" ry="8.5" fill="#50666c" opacity="0.7"/><ellipse cx="208.1" cy="415.5" rx="14.5" ry="12" fill="#33474f" opacity="0.9"/><ellipse cx="240.316" cy="415.5" rx="13.5" ry="8.5" fill="#3b566a" opacity="0.8"/><ellipse cx="273.135" cy="415.5" rx="13.5" ry="10.5" fill="#3b566a" opacity="0.9"/><ellipse cx="305.198" cy="415.5" rx="14.5" ry="9.5" fill="#4a6474" opacity="0.8"/><ellipse cx="334.9" cy="415.5" rx="14.5" ry="12" fill="#33474f" opacity="0.9"/><ellipse cx="367.853" cy="415.5" rx="12.5" ry="9.5" fill="#2c4960" opacity="0.8"/><ellipse cx="397.011" cy="415.5" rx="12.5" ry="11.5" fill="#35546a" opacity="0.9"/><ellipse cx="429.447" cy="415.5" rx="11" ry="8" fill="#5c6d6c" opacity="0.75"/><ellipse cx="460.315" cy="415.5" rx="9" ry="8" fill="#5c6d6c" opacity="0.25"/><ellipse cx="492.827" cy="415.5" rx="9" ry="8" fill="#274257" opacity="0.25"/><ellipse cx="523.452" cy="415.5" rx="11" ry="9.5" fill="#5c6d6c" opacity="0.4"/><ellipse cx="555.247" cy="415.5" rx="11" ry="9.5" fill="#4a6474" opacity="0.4"/><ellipse cx="81.3" cy="443.7" rx="14.5" ry="12" fill="#33474f" opacity="0.9"/><ellipse cx="111.024" cy="443.7" rx="12.5" ry="9.5" fill="#50666c" opacity="0.7"/><ellipse cx="144.7" cy="443.7" rx="14.5" ry="12" fill="#33474f" opacity="0.9"/><ellipse cx="176.891" cy="443.7" rx="14.5" ry="9.5" fill="#35546a" opacity="0.8"/><ellipse cx="206.171" cy="443.7" rx="14.5" ry="10.5" fill="#3b566a" opacity="0.8"/><ellipse cx="239.8" cy="443.7" rx="14.5" ry="12" fill="#33474f" opacity="0.9"/><ellipse cx="271.862" cy="443.7" rx="13.5" ry="8.5" fill="#35546a" opacity="0.95"/><ellipse cx="303.2" cy="443.7" rx="14.5" ry="12" fill="#33474f" opacity="0.9"/><ellipse cx="333.867" cy="443.7" rx="13.5" ry="10.5" fill="#274257" opacity="0.8"/><ellipse cx="368.036" cy="443.7" rx="11" ry="11.5" fill="#5c6d6c" opacity="0.7"/><ellipse cx="398.771" cy="443.7" rx="14.5" ry="10.5" fill="#35546a" opacity="0.9"/><ellipse cx="429.503" cy="443.7" rx="13" ry="8" fill="#274257" opacity="0.75"/><ellipse cx="462.293" cy="443.7" rx="11" ry="8" fill="#2c4960" opacity="0.4"/><ellipse cx="492.941" cy="443.7" rx="11" ry="6.5" fill="#5c6d6c" opacity="0.4"/><ellipse cx="527.011" cy="443.7" rx="13" ry="6.5" fill="#3b566a" opacity="0.55"/><ellipse cx="555.613" cy="443.7" rx="9" ry="9.5" fill="#5c6d6c" opacity="0.4"/><ellipse cx="80.8176" cy="471.9" rx="11" ry="11.5" fill="#5c6d6c" opacity="0.95"/><ellipse cx="113" cy="471.9" rx="14.5" ry="12" fill="#33474f" opacity="0.9"/><ellipse cx="143.131" cy="471.9" rx="14.5" ry="8.5" fill="#3b566a" opacity="0.7"/><ellipse cx="176.4" cy="471.9" rx="14.5" ry="12" fill="#33474f" opacity="0.9"/><ellipse cx="207.76" cy="471.9" rx="14.5" ry="11.5" fill="#3b566a" opacity="0.7"/><ellipse cx="239.39" cy="471.9" rx="11" ry="11.5" fill="#4a6474" opacity="0.9"/><ellipse cx="271.107" cy="471.9" rx="12.5" ry="9.5" fill="#35546a" opacity="0.95"/><ellipse cx="304.28" cy="471.9" rx="13.5" ry="11.5" fill="#2c4960" opacity="0.8"/><ellipse cx="335.184" cy="471.9" rx="12.5" ry="8.5" fill="#2c4960" opacity="0.95"/><ellipse cx="367.993" cy="471.9" rx="14.5" ry="8.5" fill="#2c4960" opacity="0.95"/><ellipse cx="399.144" cy="471.9" rx="11" ry="9.5" fill="#35546a" opacity="0.7"/><ellipse cx="430.992" cy="471.9" rx="13" ry="9.5" fill="#4a6474" opacity="0.75"/><ellipse cx="463.188" cy="471.9" rx="11" ry="6.5" fill="#5c6d6c" opacity="0.55"/><ellipse cx="493.473" cy="471.9" rx="11" ry="6.5" fill="#35546a" opacity="0.4"/><ellipse cx="525.18" cy="471.9" rx="13" ry="8" fill="#2c4960" opacity="0.55"/><ellipse cx="557.456" cy="471.9" rx="11" ry="8" fill="#2c4960" opacity="0.4"/></g><g filter="url(#blur05)"><path d="M102 292.7h22v5a11 12.5 0 0 1 -22 0z" fill="#0a1226"/><path d="M104 299.2v2a9 10 0 0 0 18 0v-2" fill="none" stroke="#7f9db5" stroke-width="0.9" opacity="0.75"/><path d="M102 294.2v6a10.5 11.5 0 0 0 4 8" fill="none" stroke="#c9d6de" stroke-width="1" opacity="0.7"/><path d="M70.3 320.9h22v5a11 12.5 0 0 1 -22 0z" fill="#0a1226"/><path d="M72.3 327.4v2a9 10 0 0 0 18 0v-2" fill="none" stroke="#7f9db5" stroke-width="0.9" opacity="0.75"/><path d="M70.3 322.4v6a10.5 11.5 0 0 0 4 8" fill="none" stroke="#c9d6de" stroke-width="1" opacity="0.7"/><path d="M133.7 320.9h22v5a11 12.5 0 0 1 -22 0z" fill="#0a1226"/><path d="M135.7 327.4v2a9 10 0 0 0 18 0v-2" fill="none" stroke="#7f9db5" stroke-width="0.9" opacity="0.75"/><path d="M133.7 322.4v6a10.5 11.5 0 0 0 4 8" fill="none" stroke="#c9d6de" stroke-width="1" opacity="0.7"/><path d="M197.1 320.9h22v5a11 12.5 0 0 1 -22 0z" fill="#0a1226"/><path d="M199.1 327.4v2a9 10 0 0 0 18 0v-2" fill="none" stroke="#7f9db5" stroke-width="0.9" opacity="0.75"/><path d="M197.1 322.4v6a10.5 11.5 0 0 0 4 8" fill="none" stroke="#c9d6de" stroke-width="1" opacity="0.7"/><path d="M292.2 320.9h22v5a11 12.5 0 0 1 -22 0z" fill="#0a1226"/><path d="M294.2 327.4v2a9 10 0 0 0 18 0v-2" fill="none" stroke="#7f9db5" stroke-width="0.9" opacity="0.75"/><path d="M292.2 322.4v6a10.5 11.5 0 0 0 4 8" fill="none" stroke="#c9d6de" stroke-width="1" opacity="0.7"/><path d="M102 349.1h22v5a11 12.5 0 0 1 -22 0z" fill="#0a1226"/><path d="M104 355.6v2a9 10 0 0 0 18 0v-2" fill="none" stroke="#7f9db5" stroke-width="0.9" opacity="0.75"/><path d="M102 350.6v6a10.5 11.5 0 0 0 4 8" fill="none" stroke="#c9d6de" stroke-width="1" opacity="0.7"/><path d="M165.4 349.1h22v5a11 12.5 0 0 1 -22 0z" fill="#0a1226"/><path d="M167.4 355.6v2a9 10 0 0 0 18 0v-2" fill="none" stroke="#7f9db5" stroke-width="0.9" opacity="0.75"/><path d="M165.4 350.6v6a10.5 11.5 0 0 0 4 8" fill="none" stroke="#c9d6de" stroke-width="1" opacity="0.7"/><path d="M228.8 349.1h22v5a11 12.5 0 0 1 -22 0z" fill="#0a1226"/><path d="M230.8 355.6v2a9 10 0 0 0 18 0v-2" fill="none" stroke="#7f9db5" stroke-width="0.9" opacity="0.75"/><path d="M228.8 350.6v6a10.5 11.5 0 0 0 4 8" fill="none" stroke="#c9d6de" stroke-width="1" opacity="0.7"/><path d="M260.5 349.1h22v5a11 12.5 0 0 1 -22 0z" fill="#0a1226"/><path d="M262.5 355.6v2a9 10 0 0 0 18 0v-2" fill="none" stroke="#7f9db5" stroke-width="0.9" opacity="0.75"/><path d="M260.5 350.6v6a10.5 11.5 0 0 0 4 8" fill="none" stroke="#c9d6de" stroke-width="1" opacity="0.7"/><path d="M355.6 349.1h22v5a11 12.5 0 0 1 -22 0z" fill="#0a1226"/><path d="M357.6 355.6v2a9 10 0 0 0 18 0v-2" fill="none" stroke="#7f9db5" stroke-width="0.9" opacity="0.75"/><path d="M355.6 350.6v6a10.5 11.5 0 0 0 4 8" fill="none" stroke="#c9d6de" stroke-width="1" opacity="0.7"/><path d="M70.3 377.3h22v5a11 12.5 0 0 1 -22 0z" fill="#0a1226"/><path d="M72.3 383.8v2a9 10 0 0 0 18 0v-2" fill="none" stroke="#7f9db5" stroke-width="0.9" opacity="0.75"/><path d="M70.3 378.8v6a10.5 11.5 0 0 0 4 8" fill="none" stroke="#c9d6de" stroke-width="1" opacity="0.7"/><path d="M133.7 377.3h22v5a11 12.5 0 0 1 -22 0z" fill="#0a1226"/><path d="M135.7 383.8v2a9 10 0 0 0 18 0v-2" fill="none" stroke="#7f9db5" stroke-width="0.9" opacity="0.75"/><path d="M133.7 378.8v6a10.5 11.5 0 0 0 4 8" fill="none" stroke="#c9d6de" stroke-width="1" opacity="0.7"/><path d="M228.8 377.3h22v5a11 12.5 0 0 1 -22 0z" fill="#0a1226"/><path d="M230.8 383.8v2a9 10 0 0 0 18 0v-2" fill="none" stroke="#7f9db5" stroke-width="0.9" opacity="0.75"/><path d="M228.8 378.8v6a10.5 11.5 0 0 0 4 8" fill="none" stroke="#c9d6de" stroke-width="1" opacity="0.7"/><path d="M323.9 377.3h22v5a11 12.5 0 0 1 -22 0z" fill="#0a1226"/><path d="M325.9 383.8v2a9 10 0 0 0 18 0v-2" fill="none" stroke="#7f9db5" stroke-width="0.9" opacity="0.75"/><path d="M323.9 378.8v6a10.5 11.5 0 0 0 4 8" fill="none" stroke="#c9d6de" stroke-width="1" opacity="0.7"/><path d="M102 405.5h22v5a11 12.5 0 0 1 -22 0z" fill="#0a1226"/><path d="M104 412v2a9 10 0 0 0 18 0v-2" fill="none" stroke="#7f9db5" stroke-width="0.9" opacity="0.75"/><path d="M102 407v6a10.5 11.5 0 0 0 4 8" fill="none" stroke="#c9d6de" stroke-width="1" opacity="0.7"/><path d="M197.1 405.5h22v5a11 12.5 0 0 1 -22 0z" fill="#0a1226"/><path d="M199.1 412v2a9 10 0 0 0 18 0v-2" fill="none" stroke="#7f9db5" stroke-width="0.9" opacity="0.75"/><path d="M197.1 407v6a10.5 11.5 0 0 0 4 8" fill="none" stroke="#c9d6de" stroke-width="1" opacity="0.7"/><path d="M323.9 405.5h22v5a11 12.5 0 0 1 -22 0z" fill="#0a1226"/><path d="M325.9 412v2a9 10 0 0 0 18 0v-2" fill="none" stroke="#7f9db5" stroke-width="0.9" opacity="0.75"/><path d="M323.9 407v6a10.5 11.5 0 0 0 4 8" fill="none" stroke="#c9d6de" stroke-width="1" opacity="0.7"/><path d="M70.3 433.7h22v5a11 12.5 0 0 1 -22 0z" fill="#0a1226"/><path d="M72.3 440.2v2a9 10 0 0 0 18 0v-2" fill="none" stroke="#7f9db5" stroke-width="0.9" opacity="0.75"/><path d="M70.3 435.2v6a10.5 11.5 0 0 0 4 8" fill="none" stroke="#c9d6de" stroke-width="1" opacity="0.7"/><path d="M133.7 433.7h22v5a11 12.5 0 0 1 -22 0z" fill="#0a1226"/><path d="M135.7 440.2v2a9 10 0 0 0 18 0v-2" fill="none" stroke="#7f9db5" stroke-width="0.9" opacity="0.75"/><path d="M133.7 435.2v6a10.5 11.5 0 0 0 4 8" fill="none" stroke="#c9d6de" stroke-width="1" opacity="0.7"/><path d="M228.8 433.7h22v5a11 12.5 0 0 1 -22 0z" fill="#0a1226"/><path d="M230.8 440.2v2a9 10 0 0 0 18 0v-2" fill="none" stroke="#7f9db5" stroke-width="0.9" opacity="0.75"/><path d="M228.8 435.2v6a10.5 11.5 0 0 0 4 8" fill="none" stroke="#c9d6de" stroke-width="1" opacity="0.7"/><path d="M292.2 433.7h22v5a11 12.5 0 0 1 -22 0z" fill="#0a1226"/><path d="M294.2 440.2v2a9 10 0 0 0 18 0v-2" fill="none" stroke="#7f9db5" stroke-width="0.9" opacity="0.75"/><path d="M292.2 435.2v6a10.5 11.5 0 0 0 4 8" fill="none" stroke="#c9d6de" stroke-width="1" opacity="0.7"/><path d="M102 461.9h22v5a11 12.5 0 0 1 -22 0z" fill="#0a1226"/><path d="M104 468.4v2a9 10 0 0 0 18 0v-2" fill="none" stroke="#7f9db5" stroke-width="0.9" opacity="0.75"/><path d="M102 463.4v6a10.5 11.5 0 0 0 4 8" fill="none" stroke="#c9d6de" stroke-width="1" opacity="0.7"/><path d="M165.4 461.9h22v5a11 12.5 0 0 1 -22 0z" fill="#0a1226"/><path d="M167.4 468.4v2a9 10 0 0 0 18 0v-2" fill="none" stroke="#7f9db5" stroke-width="0.9" opacity="0.75"/><path d="M165.4 463.4v6a10.5 11.5 0 0 0 4 8" fill="none" stroke="#c9d6de" stroke-width="1" opacity="0.7"/></g><path d="M75 231.3H551" stroke="#241d14" stroke-width="1.3"/><path d="M75 259.5H551" stroke="#241d14" stroke-width="1.3"/><path d="M75 287.7H551" stroke="#241d14" stroke-width="1.3"/><path d="M75 315.9H551" stroke="#241d14" stroke-width="1.3"/><path d="M75 344.1H551" stroke="#241d14" stroke-width="1.3"/><path d="M75 372.3H551" stroke="#241d14" stroke-width="1.3"/><path d="M75 400.5H551" stroke="#241d14" stroke-width="1.3"/><path d="M75 428.7H551" stroke="#241d14" stroke-width="1.3"/><path d="M75 456.9H551" stroke="#241d14" stroke-width="1.3"/><path d="M75 485.1H551" stroke="#241d14" stroke-width="1.3"/><path d="M65.3 190V486" stroke="#241d14" stroke-width="1.2"/><path d="M81.1 190V486" stroke="#3a3126" stroke-width="0.6" opacity="0.5"/><path d="M97 190V486" stroke="#241d14" stroke-width="1.2"/><path d="M112.8 190V486" stroke="#3a3126" stroke-width="0.6" opacity="0.5"/><path d="M128.7 190V486" stroke="#241d14" stroke-width="1.2"/><path d="M144.5 190V486" stroke="#3a3126" stroke-width="0.6" opacity="0.5"/><path d="M160.4 190V486" stroke="#241d14" stroke-width="1.2"/><path d="M176.2 190V486" stroke="#3a3126" stroke-width="0.6" opacity="0.5"/><path d="M192.1 190V486" stroke="#241d14" stroke-width="1.2"/><path d="M207.9 190V486" stroke="#3a3126" stroke-width="0.6" opacity="0.5"/><path d="M223.8 190V486" stroke="#241d14" stroke-width="1.2"/><path d="M239.6 190V486" stroke="#3a3126" stroke-width="0.6" opacity="0.5"/><path d="M255.5 190V486" stroke="#241d14" stroke-width="1.2"/><path d="M271.3 190V486" stroke="#3a3126" stroke-width="0.6" opacity="0.5"/><path d="M287.2 190V486" stroke="#241d14" stroke-width="1.2"/><path d="M303 190V486" stroke="#3a3126" stroke-width="0.6" opacity="0.5"/><path d="M318.9 190V486" stroke="#241d14" stroke-width="1.2"/><path d="M334.7 190V486" stroke="#3a3126" stroke-width="0.6" opacity="0.5"/><path d="M350.6 190V486" stroke="#241d14" stroke-width="1.2"/><path d="M366.4 190V486" stroke="#3a3126" stroke-width="0.6" opacity="0.5"/><path d="M382.3 190V486" stroke="#241d14" stroke-width="1.2"/><path d="M398.1 190V486" stroke="#2a251e" stroke-width="1.1"/><path d="M414 190V486" stroke="#241d14" stroke-width="1.2"/><path d="M429.8 190V486" stroke="#2a251e" stroke-width="1.1"/><path d="M445.7 190V486" stroke="#241d14" stroke-width="1.2"/><path d="M461.5 190V486" stroke="#2a251e" stroke-width="1.1"/><path d="M477.4 190V486" stroke="#241d14" stroke-width="1.2"/><path d="M493.2 190V486" stroke="#2a251e" stroke-width="1.1"/><path d="M509.1 190V486" stroke="#241d14" stroke-width="1.2"/><path d="M524.9 190V486" stroke="#2a251e" stroke-width="1.1"/><path d="M540.8 190V486" stroke="#241d14" stroke-width="1.2"/><path d="M556.6 190V486" stroke="#2a251e" stroke-width="1.1"/><path d="M572.5 190V486" stroke="#241d14" stroke-width="1.2"/><path d="M588.3 190V486" stroke="#2a251e" stroke-width="1.1"/></g><path id="bandp" d="M75,208 L104.6,233 L149,260 L194,277.5 L238.6,284.5 L283,283.5 L310,283 L328,279 L310,289 L283,300.5 L261,307 L238.6,308.6 L194,300.5 L149,282.7 L104.6,247 L75,213.5 Z" fill="url(#band)"/><clipPath id="bandclip"><use href="#bandp"/></clipPath><g clip-path="url(#bandclip)" stroke="#103462" stroke-width="1.3" stroke-linecap="round" opacity="0.8"><path d="M182.7 270.7l2.0 -0.8"/><path d="M263.0 264.9l2.6 0.4"/><path d="M302.0 297.1l3.2 1.8"/><path d="M184.0 253.6l2.6 0.4"/><path d="M232.7 269.3l2.0 -0.8"/><path d="M257.8 291.1l2.6 0.4"/><path d="M196.8 297.1l2.6 0.4"/><path d="M215.9 290.9l3.0 1.2"/><path d="M273.1 245.6l3.0 1.2"/><path d="M205.9 281.7l3.2 1.8"/><path d="M127.4 259.3l2.0 -0.8"/><path d="M181.2 291.2l2.0 -0.8"/><path d="M205.3 292.3l2.6 0.4"/><path d="M304.4 248.8l2.0 -0.8"/><path d="M300.2 253.1l2.6 0.4"/><path d="M301.2 249.7l2.0 -0.8"/><path d="M157.8 305.0l2.6 0.4"/><path d="M224.6 288.8l3.2 1.8"/><path d="M288.4 279.7l2.6 0.4"/><path d="M150.6 304.7l2.6 0.4"/><path d="M228.4 275.3l2.6 0.4"/><path d="M284.7 306.8l2.0 -0.8"/><path d="M167.0 299.2l2.0 -0.8"/><path d="M264.0 255.1l3.0 1.2"/><path d="M314.0 253.7l2.6 0.4"/><path d="M295.6 264.1l2.6 0.4"/><path d="M303.7 296.8l2.6 0.4"/><path d="M185.0 261.8l2.6 0.4"/><path d="M151.9 297.0l2.6 0.4"/><path d="M202.2 247.1l2.0 -0.8"/><path d="M152.8 263.9l3.0 1.2"/><path d="M161.6 254.7l2.6 0.4"/><path d="M210.3 289.1l3.0 1.2"/><path d="M128.2 267.9l2.6 0.4"/><path d="M329.2 306.1l3.0 1.2"/><path d="M181.1 267.6l2.0 -0.8"/><path d="M306.8 304.3l2.6 0.4"/><path d="M221.8 301.2l3.0 1.2"/><path d="M162.3 275.6l2.6 0.4"/><path d="M241.5 264.5l3.0 1.2"/><path d="M323.1 267.4l2.6 0.4"/><path d="M257.9 248.3l3.2 1.8"/><path d="M193.5 276.3l3.2 1.8"/><path d="M275.9 256.6l3.2 1.8"/><path d="M289.9 292.0l2.0 -0.8"/><path d="M140.1 280.9l2.6 0.4"/><path d="M245.1 275.0l3.0 1.2"/><path d="M128.3 282.7l2.0 -0.8"/><path d="M255.8 253.6l3.2 1.8"/><path d="M136.0 292.3l2.6 0.4"/><path d="M195.5 288.1l3.0 1.2"/><path d="M189.6 299.7l2.0 -0.8"/><path d="M183.7 262.0l3.0 1.2"/><path d="M304.6 252.6l2.0 -0.8"/><path d="M176.8 280.2l3.2 1.8"/><path d="M218.2 255.7l3.0 1.2"/><path d="M226.4 268.8l2.6 0.4"/><path d="M179.5 281.1l2.6 0.4"/><path d="M310.8 292.2l2.6 0.4"/><path d="M307.0 246.0l3.0 1.2"/><path d="M222.6 296.4l2.6 0.4"/><path d="M264.7 259.9l2.6 0.4"/><path d="M152.3 262.2l3.0 1.2"/><path d="M209.0 285.6l3.0 1.2"/><path d="M181.3 302.9l3.0 1.2"/><path d="M259.4 259.1l2.6 0.4"/><path d="M245.0 296.0l3.0 1.2"/><path d="M292.5 249.7l3.2 1.8"/><path d="M326.4 247.7l2.6 0.4"/><path d="M291.1 267.2l2.0 -0.8"/><path d="M244.3 256.9l3.2 1.8"/><path d="M317.5 271.8l2.0 -0.8"/><path d="M126.8 296.3l2.6 0.4"/><path d="M274.1 289.1l2.6 0.4"/><path d="M287.5 295.1l2.6 0.4"/><path d="M161.6 259.3l3.2 1.8"/><path d="M268.8 249.3l3.0 1.2"/><path d="M286.2 276.2l2.0 -0.8"/><path d="M230.4 266.5l3.0 1.2"/><path d="M277.8 286.4l2.6 0.4"/><path d="M302.0 248.3l3.2 1.8"/><path d="M285.2 251.0l3.2 1.8"/><path d="M242.4 297.2l2.0 -0.8"/><path d="M261.3 293.5l2.6 0.4"/><path d="M174.5 290.1l3.2 1.8"/><path d="M310.0 293.4l2.6 0.4"/><path d="M211.4 298.6l3.2 1.8"/><path d="M277.1 283.6l3.0 1.2"/><path d="M134.3 295.9l3.2 1.8"/><path d="M277.7 300.1l2.6 0.4"/><path d="M161.6 274.8l2.6 0.4"/><path d="M304.3 282.4l3.0 1.2"/><path d="M202.3 295.9l3.2 1.8"/><path d="M293.4 271.4l3.0 1.2"/><path d="M168.0 288.7l3.2 1.8"/><path d="M259.3 303.8l2.0 -0.8"/><path d="M286.5 245.3l2.0 -0.8"/><path d="M246.8 306.8l2.0 -0.8"/><path d="M207.9 284.3l2.0 -0.8"/><path d="M150.6 280.5l3.0 1.2"/><path d="M194.3 299.9l3.0 1.2"/><path d="M181.3 250.7l3.2 1.8"/><path d="M159.3 302.8l2.0 -0.8"/><path d="M258.8 297.5l3.0 1.2"/><path d="M165.4 285.8l2.0 -0.8"/><path d="M292.8 257.0l3.2 1.8"/><path d="M189.9 254.8l2.6 0.4"/><path d="M167.1 302.8l2.0 -0.8"/><path d="M184.8 265.7l2.6 0.4"/><path d="M299.9 307.9l2.0 -0.8"/><path d="M230.7 245.0l2.6 0.4"/><path d="M141.8 261.0l3.2 1.8"/><path d="M274.7 289.0l2.0 -0.8"/><path d="M148.4 294.0l3.2 1.8"/><path d="M259.9 249.9l3.2 1.8"/><path d="M213.3 307.3l3.2 1.8"/><path d="M184.1 291.1l2.0 -0.8"/><path d="M316.9 297.6l3.0 1.2"/><path d="M310.5 277.4l3.2 1.8"/><path d="M265.2 246.2l3.0 1.2"/><path d="M237.1 274.1l2.6 0.4"/><path d="M273.1 293.7l3.0 1.2"/><path d="M319.1 276.4l3.0 1.2"/><path d="M320.1 302.9l2.6 0.4"/><path d="M159.4 304.7l3.0 1.2"/><path d="M329.5 256.3l3.2 1.8"/><path d="M251.7 260.7l3.0 1.2"/><path d="M208.3 308.6l3.0 1.2"/><path d="M289.0 289.0l2.0 -0.8"/><path d="M223.5 308.3l3.2 1.8"/><path d="M265.1 263.0l2.6 0.4"/><path d="M295.0 277.2l3.0 1.2"/><path d="M286.7 267.6l2.6 0.4"/><path d="M162.2 297.5l3.0 1.2"/><path d="M154.1 293.0l2.6 0.4"/><path d="M263.1 304.0l3.2 1.8"/><path d="M324.0 295.5l3.2 1.8"/><path d="M322.0 257.2l3.2 1.8"/><path d="M307.2 275.9l3.2 1.8"/><path d="M314.9 271.2l3.2 1.8"/><path d="M196.0 265.8l2.0 -0.8"/><path d="M176.0 258.3l2.0 -0.8"/><path d="M225.3 271.5l2.6 0.4"/><path d="M283.5 265.5l2.6 0.4"/><path d="M178.6 279.8l2.0 -0.8"/><path d="M278.1 262.9l3.2 1.8"/><path d="M270.6 270.7l3.2 1.8"/><path d="M298.8 252.9l2.0 -0.8"/><path d="M282.0 247.7l3.2 1.8"/><path d="M194.3 306.1l3.2 1.8"/><path d="M325.9 302.6l3.0 1.2"/><path d="M278.3 289.1l2.0 -0.8"/><path d="M295.2 291.3l3.2 1.8"/><path d="M154.8 256.5l3.0 1.2"/><path d="M282.7 270.6l3.2 1.8"/><path d="M204.0 277.5l3.2 1.8"/><path d="M193.4 257.1l2.6 0.4"/><path d="M231.7 278.9l3.2 1.8"/><path d="M148.0 267.0l3.0 1.2"/><path d="M314.2 249.3l3.0 1.2"/><path d="M298.9 288.4l2.0 -0.8"/><path d="M204.8 282.3l3.2 1.8"/><path d="M284.9 289.2l2.6 0.4"/><path d="M151.7 288.7l2.6 0.4"/><path d="M225.1 303.4l3.0 1.2"/><path d="M276.0 298.4l2.0 -0.8"/><path d="M304.5 253.5l2.0 -0.8"/><path d="M248.6 262.9l3.0 1.2"/><path d="M282.0 284.3l3.2 1.8"/><path d="M247.6 303.8l3.2 1.8"/><path d="M139.7 288.9l3.0 1.2"/><path d="M195.5 290.5l3.0 1.2"/><path d="M145.6 307.0l2.6 0.4"/><path d="M120.7 285.9l2.6 0.4"/><path d="M213.8 277.7l2.0 -0.8"/><path d="M244.0 283.7l3.0 1.2"/><path d="M128.3 298.8l3.0 1.2"/><path d="M221.6 264.1l3.2 1.8"/><path d="M322.6 279.5l2.6 0.4"/><path d="M165.8 296.6l2.6 0.4"/><path d="M179.2 308.3l3.0 1.2"/><path d="M166.8 256.2l3.2 1.8"/><path d="M209.0 249.1l3.2 1.8"/><path d="M272.2 283.0l2.0 -0.8"/><path d="M202.0 307.0l2.0 -0.8"/><path d="M167.5 301.4l3.0 1.2"/><path d="M288.9 307.5l3.2 1.8"/><path d="M258.1 261.4l2.0 -0.8"/><path d="M240.9 273.0l2.0 -0.8"/><path d="M160.1 285.0l3.0 1.2"/><path d="M204.6 263.4l2.6 0.4"/><path d="M136.1 303.3l3.0 1.2"/><path d="M212.1 257.9l2.6 0.4"/><path d="M282.4 258.1l3.2 1.8"/><path d="M277.0 306.6l3.0 1.2"/><path d="M133.2 258.4l3.0 1.2"/><path d="M295.4 286.7l3.2 1.8"/><path d="M237.1 285.8l3.2 1.8"/><path d="M328.2 264.9l3.0 1.2"/><path d="M275.3 289.9l2.0 -0.8"/><path d="M308.8 297.3l2.0 -0.8"/><path d="M282.3 267.3l2.6 0.4"/><path d="M196.4 302.5l2.0 -0.8"/><path d="M328.0 304.3l3.2 1.8"/><path d="M220.0 298.4l2.6 0.4"/><path d="M298.5 279.3l3.2 1.8"/><path d="M226.7 258.6l3.2 1.8"/><path d="M257.8 305.9l2.6 0.4"/><path d="M269.1 306.4l2.0 -0.8"/><path d="M282.6 292.2l2.6 0.4"/><path d="M290.5 299.7l2.6 0.4"/><path d="M149.0 252.2l2.0 -0.8"/><path d="M125.8 297.9l3.0 1.2"/><path d="M217.4 247.8l3.0 1.2"/><path d="M300.3 267.0l2.0 -0.8"/><path d="M221.8 286.6l2.6 0.4"/><path d="M121.5 258.3l3.2 1.8"/><path d="M200.3 251.8l2.6 0.4"/><path d="M318.4 273.6l2.0 -0.8"/><path d="M280.0 282.1l3.0 1.2"/><path d="M301.0 256.0l2.6 0.4"/><path d="M270.5 275.5l2.0 -0.8"/><path d="M247.2 252.7l2.0 -0.8"/><path d="M245.8 249.1l2.6 0.4"/><path d="M288.0 302.8l3.0 1.2"/><path d="M202.4 296.2l2.6 0.4"/><path d="M253.1 293.2l3.0 1.2"/><path d="M171.0 304.0l2.6 0.4"/><path d="M288.6 247.5l3.0 1.2"/><path d="M204.4 306.2l2.6 0.4"/><path d="M282.8 247.9l2.0 -0.8"/><path d="M175.2 255.0l3.0 1.2"/><path d="M220.6 307.2l3.0 1.2"/><path d="M159.3 297.5l2.6 0.4"/><path d="M249.3 266.0l2.0 -0.8"/><path d="M312.4 245.1l3.0 1.2"/><path d="M236.7 298.4l3.0 1.2"/><path d="M268.2 288.0l3.2 1.8"/><path d="M216.0 288.6l2.6 0.4"/><path d="M125.1 298.9l2.0 -0.8"/><path d="M163.8 291.0l2.6 0.4"/><path d="M261.1 308.9l3.0 1.2"/><path d="M234.7 267.9l3.0 1.2"/><path d="M138.4 260.5l3.0 1.2"/><path d="M138.9 262.8l3.2 1.8"/><path d="M280.1 254.6l3.2 1.8"/><path d="M281.4 245.5l3.0 1.2"/><path d="M129.1 289.4l2.6 0.4"/><path d="M229.2 274.6l2.0 -0.8"/><path d="M314.0 282.3l2.6 0.4"/><path d="M312.4 292.6l3.0 1.2"/><path d="M311.7 299.4l3.0 1.2"/><path d="M260.7 253.8l2.0 -0.8"/><path d="M288.2 248.6l3.2 1.8"/><path d="M212.8 290.9l3.2 1.8"/><path d="M285.4 300.0l3.0 1.2"/><path d="M188.1 251.2l2.0 -0.8"/><path d="M154.2 306.5l2.0 -0.8"/><path d="M280.1 299.4l3.2 1.8"/><path d="M177.6 261.2l2.0 -0.8"/><path d="M232.9 267.1l3.2 1.8"/><path d="M313.4 266.4l2.6 0.4"/><path d="M306.9 296.6l2.6 0.4"/><path d="M142.0 298.7l3.2 1.8"/><path d="M209.3 266.9l3.0 1.2"/><path d="M232.8 307.8l2.6 0.4"/><path d="M164.4 248.5l2.6 0.4"/><path d="M317.0 271.5l3.0 1.2"/><path d="M256.0 259.2l3.0 1.2"/><path d="M270.0 273.0l3.0 1.2"/><path d="M327.8 256.5l2.0 -0.8"/><path d="M249.0 255.8l3.2 1.8"/><path d="M278.2 261.2l3.2 1.8"/><path d="M321.7 251.0l2.6 0.4"/><path d="M254.6 285.2l2.6 0.4"/><path d="M257.8 283.9l2.0 -0.8"/><path d="M183.8 249.2l3.0 1.2"/><path d="M232.5 249.8l3.0 1.2"/><path d="M149.9 252.3l2.0 -0.8"/><path d="M256.2 278.2l3.2 1.8"/><path d="M313.3 274.3l3.0 1.2"/><path d="M173.5 270.7l2.6 0.4"/><path d="M213.4 292.3l3.0 1.2"/><path d="M300.9 274.9l3.2 1.8"/><path d="M294.8 247.0l2.6 0.4"/><path d="M142.4 258.6l3.2 1.8"/><path d="M260.9 263.0l3.0 1.2"/><path d="M297.6 249.7l3.0 1.2"/><path d="M153.2 287.9l3.2 1.8"/><path d="M258.9 256.7l2.6 0.4"/><path d="M221.1 299.4l3.0 1.2"/><path d="M200.4 287.4l2.6 0.4"/><path d="M133.0 264.2l3.2 1.8"/><path d="M299.0 253.5l3.2 1.8"/><path d="M196.4 292.0l2.6 0.4"/><path d="M197.6 292.9l3.2 1.8"/><path d="M196.9 279.0l3.0 1.2"/><path d="M303.2 304.1l2.6 0.4"/><path d="M179.9 269.8l3.0 1.2"/><path d="M167.0 257.6l2.6 0.4"/><path d="M280.2 300.5l2.6 0.4"/><path d="M254.7 275.7l3.0 1.2"/><path d="M130.6 288.1l3.2 1.8"/><path d="M169.3 246.9l2.0 -0.8"/><path d="M222.4 252.1l2.0 -0.8"/><path d="M139.7 252.7l2.0 -0.8"/><path d="M313.8 304.1l2.0 -0.8"/><path d="M212.5 252.7l3.0 1.2"/><path d="M175.9 273.9l2.6 0.4"/><path d="M316.7 281.1l3.0 1.2"/><path d="M227.0 276.5l2.6 0.4"/><path d="M238.2 301.6l2.0 -0.8"/><path d="M143.1 306.3l3.0 1.2"/><path d="M170.3 256.1l3.2 1.8"/><path d="M164.6 250.4l3.2 1.8"/><path d="M218.4 306.5l2.6 0.4"/><path d="M135.6 274.4l3.2 1.8"/><path d="M140.6 263.2l3.2 1.8"/><path d="M134.3 290.7l2.0 -0.8"/><path d="M221.1 256.7l3.0 1.2"/><path d="M251.8 297.8l3.0 1.2"/><path d="M255.1 289.6l3.0 1.2"/><path d="M232.8 260.2l2.0 -0.8"/><path d="M259.5 254.1l3.2 1.8"/><path d="M150.5 297.2l3.2 1.8"/><path d="M275.5 300.7l3.2 1.8"/><path d="M257.9 287.3l2.6 0.4"/><path d="M123.3 274.8l3.0 1.2"/><path d="M214.4 300.3l3.2 1.8"/><path d="M212.2 254.1l2.6 0.4"/><path d="M183.9 265.4l2.6 0.4"/><path d="M317.3 271.1l2.6 0.4"/><path d="M122.6 306.6l2.6 0.4"/><path d="M133.8 269.3l2.0 -0.8"/><path d="M261.2 258.8l2.6 0.4"/><path d="M160.4 275.6l3.2 1.8"/><path d="M329.9 274.7l2.6 0.4"/><path d="M324.7 294.1l3.0 1.2"/><path d="M205.5 267.3l3.0 1.2"/><path d="M239.4 295.1l2.6 0.4"/><path d="M293.9 245.0l3.2 1.8"/><path d="M247.4 275.9l2.0 -0.8"/><path d="M148.9 260.6l3.0 1.2"/><path d="M177.5 272.0l2.6 0.4"/><path d="M329.7 253.8l3.2 1.8"/><path d="M306.2 248.7l2.6 0.4"/><path d="M208.8 250.2l2.0 -0.8"/><path d="M285.9 261.5l2.6 0.4"/><path d="M300.6 307.2l3.2 1.8"/><path d="M323.2 291.3l3.0 1.2"/><path d="M130.8 304.5l3.0 1.2"/><path d="M323.2 303.8l3.0 1.2"/><path d="M180.7 307.8l2.6 0.4"/><path d="M208.2 279.4l3.2 1.8"/><path d="M289.5 287.5l3.0 1.2"/><path d="M213.7 277.5l3.2 1.8"/><path d="M308.7 307.6l2.6 0.4"/><path d="M211.6 283.5l3.2 1.8"/><path d="M239.8 256.8l3.2 1.8"/><path d="M255.1 271.8l3.2 1.8"/><path d="M262.3 249.8l3.0 1.2"/><path d="M251.1 275.7l3.2 1.8"/><path d="M287.9 245.6l2.0 -0.8"/><path d="M191.4 294.5l2.6 0.4"/><path d="M217.8 266.1l2.6 0.4"/><path d="M325.4 250.8l2.6 0.4"/><path d="M233.9 271.1l2.6 0.4"/><path d="M309.0 260.1l3.2 1.8"/><path d="M199.8 277.1l3.2 1.8"/><path d="M146.8 259.5l2.6 0.4"/><path d="M304.6 252.4l2.6 0.4"/><path d="M305.8 285.0l3.0 1.2"/><path d="M218.6 274.5l3.2 1.8"/><path d="M241.2 268.1l2.0 -0.8"/><path d="M186.0 297.7l3.0 1.2"/><path d="M262.1 295.8l2.0 -0.8"/><path d="M197.6 307.6l3.2 1.8"/><path d="M295.5 286.7l2.6 0.4"/><path d="M268.0 307.8l2.6 0.4"/><path d="M197.5 300.3l3.2 1.8"/><path d="M154.3 249.2l2.0 -0.8"/><path d="M298.4 301.9l3.0 1.2"/><path d="M161.6 246.0l2.0 -0.8"/><path d="M272.4 262.7l3.0 1.2"/><path d="M287.7 299.4l3.0 1.2"/><path d="M266.1 245.3l2.6 0.4"/><path d="M156.7 303.5l2.6 0.4"/><path d="M124.1 252.4l3.0 1.2"/><path d="M323.7 254.7l3.2 1.8"/><path d="M135.4 267.7l3.2 1.8"/><path d="M207.7 276.1l3.2 1.8"/><path d="M189.9 305.3l3.2 1.8"/><path d="M154.1 250.9l3.0 1.2"/><path d="M266.3 262.1l3.2 1.8"/><path d="M191.8 277.0l2.6 0.4"/><path d="M247.1 309.3l3.0 1.2"/><path d="M277.8 299.5l2.0 -0.8"/><path d="M200.9 291.6l2.6 0.4"/><path d="M185.4 249.7l2.0 -0.8"/><path d="M139.8 283.1l2.6 0.4"/><path d="M286.7 274.4l2.0 -0.8"/><path d="M286.2 260.0l3.0 1.2"/><path d="M293.2 275.7l2.0 -0.8"/><path d="M149.0 257.5l2.6 0.4"/><path d="M142.7 286.2l2.6 0.4"/><path d="M277.7 277.6l3.2 1.8"/><path d="M272.1 247.0l3.0 1.2"/><path d="M166.4 263.9l2.0 -0.8"/><path d="M249.1 303.6l2.6 0.4"/><path d="M327.1 309.7l3.2 1.8"/><path d="M147.6 249.0l2.0 -0.8"/><path d="M282.0 298.8l3.2 1.8"/><path d="M203.3 279.0l3.2 1.8"/><path d="M131.7 284.6l3.0 1.2"/><path d="M181.6 266.1l2.6 0.4"/><path d="M151.8 305.6l2.6 0.4"/><path d="M217.0 257.9l3.0 1.2"/><path d="M284.9 291.7l3.2 1.8"/><path d="M264.0 276.0l3.2 1.8"/><path d="M282.8 251.9l3.0 1.2"/><path d="M251.0 273.4l3.0 1.2"/><path d="M173.0 288.5l2.6 0.4"/><path d="M214.4 300.4l2.0 -0.8"/><path d="M281.8 269.2l2.0 -0.8"/><path d="M283.7 292.1l3.2 1.8"/><path d="M249.9 251.8l2.0 -0.8"/><path d="M138.5 305.0l2.6 0.4"/><path d="M127.8 308.8l2.6 0.4"/><path d="M133.3 289.5l3.0 1.2"/><path d="M183.0 249.5l3.2 1.8"/><path d="M211.8 250.6l2.0 -0.8"/><path d="M266.5 291.5l3.0 1.2"/><path d="M126.7 304.1l2.6 0.4"/><path d="M231.3 290.5l3.2 1.8"/><path d="M154.4 279.6l2.0 -0.8"/><path d="M155.5 256.3l2.0 -0.8"/><path d="M268.7 268.6l2.6 0.4"/><path d="M216.2 280.9l3.0 1.2"/><path d="M174.5 293.1l2.0 -0.8"/><path d="M219.3 307.2l3.2 1.8"/><path d="M279.3 270.6l2.6 0.4"/><path d="M274.1 253.4l2.6 0.4"/><path d="M312.3 276.9l3.2 1.8"/><path d="M288.5 246.8l2.0 -0.8"/><path d="M291.0 290.2l3.2 1.8"/><path d="M185.8 292.4l3.2 1.8"/><path d="M263.3 287.9l3.0 1.2"/><path d="M292.6 301.1l3.2 1.8"/><path d="M122.2 294.6l3.0 1.2"/><path d="M308.9 306.9l3.2 1.8"/><path d="M167.9 265.7l3.2 1.8"/><path d="M319.4 264.6l3.2 1.8"/><path d="M202.8 263.5l2.6 0.4"/><path d="M122.6 288.9l2.6 0.4"/><path d="M291.6 286.9l3.0 1.2"/><path d="M328.0 292.3l2.6 0.4"/><path d="M290.7 261.5l3.2 1.8"/><path d="M199.9 299.6l2.6 0.4"/><path d="M170.4 291.4l3.0 1.2"/><path d="M192.5 299.9l3.2 1.8"/><path d="M304.6 254.0l3.0 1.2"/><path d="M286.7 299.8l2.0 -0.8"/><path d="M318.7 275.6l2.0 -0.8"/><path d="M284.3 301.5l2.6 0.4"/><path d="M273.2 268.5l3.0 1.2"/><path d="M141.1 266.3l3.0 1.2"/><path d="M309.6 246.7l3.2 1.8"/><path d="M134.8 249.4l3.0 1.2"/><path d="M161.7 275.0l2.0 -0.8"/><path d="M185.3 276.0l2.0 -0.8"/><path d="M185.1 286.1l2.0 -0.8"/><path d="M186.9 267.4l3.2 1.8"/><path d="M275.2 267.9l3.0 1.2"/><path d="M246.0 309.9l3.0 1.2"/><path d="M221.6 272.1l2.6 0.4"/><path d="M163.7 268.6l3.2 1.8"/><path d="M314.8 287.8l3.0 1.2"/><path d="M257.5 281.9l2.0 -0.8"/><path d="M244.1 273.1l2.6 0.4"/><path d="M210.2 251.0l3.2 1.8"/><path d="M292.3 296.3l3.2 1.8"/><path d="M141.3 296.6l3.0 1.2"/><path d="M166.0 302.4l2.0 -0.8"/><path d="M153.1 286.4l3.0 1.2"/><path d="M315.3 258.1l3.2 1.8"/><path d="M328.2 278.5l2.6 0.4"/><path d="M223.2 293.9l3.0 1.2"/><path d="M260.4 254.3l2.0 -0.8"/><path d="M330.0 281.5l2.6 0.4"/><path d="M158.5 304.2l3.0 1.2"/><path d="M302.4 268.5l3.0 1.2"/><path d="M163.6 246.5l2.6 0.4"/><path d="M227.3 305.6l2.6 0.4"/><path d="M150.2 286.0l3.0 1.2"/><path d="M209.0 284.1l3.2 1.8"/><path d="M246.9 260.2l2.6 0.4"/><path d="M227.8 275.4l3.0 1.2"/><path d="M282.5 297.2l2.6 0.4"/><path d="M277.2 260.4l3.2 1.8"/><path d="M168.7 298.4l2.6 0.4"/><path d="M246.6 303.8l2.6 0.4"/><path d="M325.0 291.9l3.0 1.2"/><path d="M277.3 291.3l2.6 0.4"/><path d="M177.2 299.5l3.0 1.2"/><path d="M222.6 245.1l3.0 1.2"/><path d="M302.4 303.3l2.0 -0.8"/><path d="M149.8 274.9l2.6 0.4"/><path d="M329.5 266.8l2.6 0.4"/><path d="M329.3 259.8l2.0 -0.8"/><path d="M194.9 273.3l3.2 1.8"/><path d="M154.0 259.2l3.0 1.2"/><path d="M149.9 283.3l3.0 1.2"/><path d="M226.0 256.9l2.0 -0.8"/><path d="M296.4 295.0l2.0 -0.8"/><path d="M219.3 263.0l2.6 0.4"/><path d="M219.1 278.1l2.6 0.4"/><path d="M168.9 267.9l2.0 -0.8"/><path d="M323.1 271.2l3.2 1.8"/><path d="M274.2 266.8l2.0 -0.8"/><path d="M255.6 275.2l3.0 1.2"/><path d="M128.7 296.0l2.0 -0.8"/><path d="M194.4 285.9l2.0 -0.8"/><path d="M319.9 285.3l2.6 0.4"/><path d="M236.4 288.1l3.0 1.2"/><path d="M319.4 254.4l3.2 1.8"/><path d="M262.3 270.9l3.2 1.8"/><path d="M243.9 289.0l3.2 1.8"/><path d="M288.2 255.2l2.0 -0.8"/><path d="M256.7 263.6l2.6 0.4"/><path d="M308.5 297.0l3.0 1.2"/><path d="M249.4 297.4l2.0 -0.8"/><path d="M224.1 268.6l3.0 1.2"/><path d="M193.5 279.6l3.2 1.8"/><path d="M254.2 276.0l3.2 1.8"/><path d="M173.5 284.6l3.2 1.8"/><path d="M123.5 297.0l3.0 1.2"/><path d="M196.2 304.3l3.0 1.2"/><path d="M177.9 266.6l2.0 -0.8"/><path d="M153.6 289.8l3.0 1.2"/><path d="M135.9 258.6l2.6 0.4"/><path d="M150.8 259.8l3.0 1.2"/><path d="M211.7 252.9l3.0 1.2"/><path d="M318.9 280.8l3.0 1.2"/><path d="M282.3 254.7l2.6 0.4"/><path d="M128.4 277.3l2.0 -0.8"/><path d="M208.7 285.9l2.6 0.4"/><path d="M245.4 308.5l3.0 1.2"/><path d="M137.7 255.4l3.0 1.2"/><path d="M124.6 291.0l2.6 0.4"/><path d="M143.6 255.5l2.6 0.4"/><path d="M161.5 268.3l2.6 0.4"/><path d="M195.7 308.6l2.0 -0.8"/><path d="M188.3 271.6l2.0 -0.8"/><path d="M168.9 308.3l2.6 0.4"/><path d="M154.8 303.0l3.2 1.8"/><path d="M251.5 287.6l2.0 -0.8"/><path d="M231.3 289.2l3.0 1.2"/><path d="M284.5 280.6l3.0 1.2"/><path d="M214.8 302.3l3.2 1.8"/><path d="M258.6 278.2l2.6 0.4"/><path d="M300.5 304.5l2.6 0.4"/><path d="M224.3 289.7l2.6 0.4"/><path d="M265.0 245.3l3.0 1.2"/><path d="M297.3 268.5l2.6 0.4"/><path d="M239.7 292.3l2.0 -0.8"/><path d="M190.1 276.2l2.6 0.4"/><path d="M186.4 269.5l3.2 1.8"/><path d="M328.6 258.7l3.0 1.2"/><path d="M328.1 289.7l3.2 1.8"/><path d="M254.9 281.4l3.2 1.8"/><path d="M153.3 300.7l2.0 -0.8"/><path d="M319.9 300.8l3.0 1.2"/><path d="M223.3 298.9l3.0 1.2"/><path d="M151.3 294.5l2.0 -0.8"/><path d="M310.5 283.1l2.0 -0.8"/><path d="M268.1 245.3l2.6 0.4"/><path d="M141.6 263.0l3.0 1.2"/><path d="M247.3 273.3l3.2 1.8"/><path d="M137.1 274.2l3.2 1.8"/><path d="M140.5 277.1l3.2 1.8"/><path d="M165.0 287.5l3.2 1.8"/><path d="M284.2 258.4l2.0 -0.8"/><path d="M281.5 290.0l3.2 1.8"/><path d="M215.8 301.1l2.0 -0.8"/><path d="M263.5 290.3l3.0 1.2"/><path d="M129.7 299.4l3.2 1.8"/><path d="M131.2 309.2l2.6 0.4"/><path d="M193.8 300.3l2.6 0.4"/><path d="M174.5 277.9l2.0 -0.8"/><path d="M220.4 250.6l3.0 1.2"/><path d="M165.2 284.0l3.0 1.2"/><path d="M273.1 267.3l2.6 0.4"/><path d="M320.9 286.9l3.0 1.2"/><path d="M255.5 299.5l3.2 1.8"/><path d="M190.6 255.6l2.6 0.4"/><path d="M219.5 296.1l3.2 1.8"/><path d="M174.5 249.0l2.6 0.4"/><path d="M310.4 284.8l3.0 1.2"/><path d="M252.5 279.6l2.0 -0.8"/><path d="M164.6 272.1l2.0 -0.8"/><path d="M289.2 289.3l2.0 -0.8"/><path d="M168.7 275.1l2.6 0.4"/><path d="M313.9 255.4l3.0 1.2"/><path d="M236.4 271.3l2.6 0.4"/><path d="M312.1 303.4l2.0 -0.8"/><path d="M223.6 262.4l3.2 1.8"/><path d="M140.8 277.3l3.2 1.8"/><path d="M154.0 302.6l3.2 1.8"/><path d="M199.7 252.3l2.6 0.4"/><path d="M224.7 263.4l3.2 1.8"/><path d="M200.9 280.6l3.2 1.8"/><path d="M281.8 265.7l2.0 -0.8"/><path d="M146.0 263.5l3.2 1.8"/><path d="M238.2 306.6l3.2 1.8"/><path d="M220.9 305.4l2.6 0.4"/><path d="M234.1 301.1l2.6 0.4"/><path d="M195.7 284.3l3.2 1.8"/><path d="M181.5 291.1l3.0 1.2"/><path d="M208.3 258.6l3.0 1.2"/><path d="M163.2 278.0l3.0 1.2"/></g><path d="M75,213.5 L104.6,247 L149,282.7 L194,300.5 L238.6,308.6 L261,307 L283,300.5 L310,289 L328,279 L352.4,263.5 L372.5,296 L395,327 L417,352 L439.5,372 L462,387.6 L484,401 L506.4,412 L528.8,419 L551,422.4" fill="none" stroke="#0d1524" stroke-width="2.2" stroke-linejoin="round"/><ellipse cx="487" cy="467" rx="3" ry="6" fill="#e8e8e0"/><circle cx="83" cy="472" r="7" fill="#f4f4f4" opacity="0.85"/></g><text x="76" y="496" font-size="9.6" font-style="italic" fill="#222" textLength="457" lengthAdjust="spacingAndGlyphs">Glassy construction resembles a hoisted sail, water wave or quartz crystal; it sits on top of an old warehouse building</text><text x="76" y="505.3" font-size="9.6" font-style="italic" fill="#222" textLength="458" lengthAdjust="spacingAndGlyphs">(Kaispeicher A, built 1963) near the historical Speicherstadt and is designed by architecture firm Herzog &amp; de Meuron.</text><text x="76.5" y="544.8" font-size="35.5" font-weight="bold" fill="#17174d" stroke="#17174d" stroke-width="1.5" stroke-linejoin="round" textLength="393" lengthAdjust="spacingAndGlyphs">Hamburg Highlights</text><text x="76" y="618.5" font-size="16.5" font-weight="bold" font-family="Liberation Serif, serif" fill="#1a1a1a" textLength="307" lengthAdjust="spacingAndGlyphs">The Elbphilharmonic - A spectacular building</text><text x="86" y="655.5" font-size="10" font-family="Liberation Serif, serif" fill="#111" stroke="#111" stroke-width="0.3" textLength="100" lengthAdjust="spacingAndGlyphs">By Charlotte Overballe</text><text x="76" y="665.5" font-size="10" font-family="Liberation Serif, serif" fill="#111" stroke="#111" stroke-width="0.3" textLength="79" lengthAdjust="spacingAndGlyphs">scoa@stibode.com)</text><text x="86" y="695.5" font-size="10" font-family="Liberation Serif, serif" fill="#111" stroke="#111" stroke-width="0.3" textLength="100" lengthAdjust="spacingAndGlyphs">The    Elbphilharmonie</text><text x="76" y="705.5" font-size="10" font-family="Liberation Serif, serif" fill="#111" stroke="#111" stroke-width="0.3" textLength="110" lengthAdjust="spacingAndGlyphs">(also English: Elbe Philhar-</text><text x="76" y="715.5" font-size="10" font-family="Liberation Serif, serif" fill="#111" stroke="#111" stroke-width="0.3" textLength="110" lengthAdjust="spacingAndGlyphs">monie Hall) is a concert</text><text x="76" y="725.5" font-size="10" font-family="Liberation Serif, serif" fill="#111" stroke="#111" stroke-width="0.3" textLength="110" lengthAdjust="spacingAndGlyphs">hall in the HafenCity quar-</text><text x="76" y="735.5" font-size="10" font-family="Liberation Serif, serif" fill="#111" stroke="#111" stroke-width="0.3" textLength="110" lengthAdjust="spacingAndGlyphs">ter of Hamburg, Germany,</text><text x="76" y="745.5" font-size="10" font-family="Liberation Serif, serif" fill="#111" stroke="#111" stroke-width="0.3" textLength="110" lengthAdjust="spacingAndGlyphs">on the Grasbrook (de) pen-</text><text x="76" y="755.5" font-size="10" font-family="Liberation Serif, serif" fill="#111" stroke="#111" stroke-width="0.3" textLength="110" lengthAdjust="spacingAndGlyphs">insula of the Elbe River. It</text><text x="76" y="765.5" font-size="10" font-family="Liberation Serif, serif" fill="#111" stroke="#111" stroke-width="0.3" textLength="110" lengthAdjust="spacingAndGlyphs">is one of the largest and</text><text x="76" y="775.5" font-size="10" font-family="Liberation Serif, serif" fill="#111" stroke="#111" stroke-width="0.3" textLength="110" lengthAdjust="spacingAndGlyphs">most   acoustically   ad-</text><text x="76" y="785.5" font-size="10" font-family="Liberation Serif, serif" fill="#111" stroke="#111" stroke-width="0.3" textLength="110" lengthAdjust="spacingAndGlyphs">vanced concert halls in the</text><text x="76" y="795.5" font-size="10" font-family="Liberation Serif, serif" fill="#111" stroke="#111" stroke-width="0.3" textLength="110" lengthAdjust="spacingAndGlyphs">world. It is popularly nick-</text><text x="76" y="805.5" font-size="10" font-family="Liberation Serif, serif" fill="#111" stroke="#111" stroke-width="0.3" textLength="110" lengthAdjust="spacingAndGlyphs">named Elphi. The Elbphil-</text><text x="76" y="815.5" font-size="10" font-family="Liberation Serif, serif" fill="#111" stroke="#111" stroke-width="0.3" textLength="110" lengthAdjust="spacingAndGlyphs">harmonie was officially in-</text><text x="76" y="825.5" font-size="10" font-family="Liberation Serif, serif" fill="#111" stroke="#111" stroke-width="0.3" textLength="110" lengthAdjust="spacingAndGlyphs">augurated with concerts of</text><path d="M76 670.5H186" stroke="#222" stroke-width="1"/><text x="197" y="655.5" font-size="10" font-family="Liberation Serif, serif" fill="#111" stroke="#111" stroke-width="0.3" textLength="111" lengthAdjust="spacingAndGlyphs">the NDR Elbphilharmonic</text><text x="197" y="665.5" font-size="10" font-family="Liberation Serif, serif" fill="#111" stroke="#111" stroke-width="0.3" textLength="111" lengthAdjust="spacingAndGlyphs">Orchestra and a light show</text><text x="197" y="675.5" font-size="10" font-family="Liberation Serif, serif" fill="#111" stroke="#111" stroke-width="0.3" textLength="111" lengthAdjust="spacingAndGlyphs">on 11 January 2017. The</text><text x="197" y="685.5" font-size="10" font-family="Liberation Serif, serif" fill="#111" stroke="#111" stroke-width="0.3" textLength="111" lengthAdjust="spacingAndGlyphs">new glassy construction re-</text><text x="197" y="695.5" font-size="10" font-family="Liberation Serif, serif" fill="#111" stroke="#111" stroke-width="0.3" textLength="111" lengthAdjust="spacingAndGlyphs">sembles a hoisted sail, wa-</text><text x="197" y="705.5" font-size="10" font-family="Liberation Serif, serif" fill="#111" stroke="#111" stroke-width="0.3" textLength="111" lengthAdjust="spacingAndGlyphs">ter wave or quartz crystal;</text><text x="197" y="715.5" font-size="10" font-family="Liberation Serif, serif" fill="#111" stroke="#111" stroke-width="0.3" textLength="111" lengthAdjust="spacingAndGlyphs">it sits on top of an old ware-</text><text x="197" y="725.5" font-size="10" font-family="Liberation Serif, serif" fill="#111" stroke="#111" stroke-width="0.3" textLength="111" lengthAdjust="spacingAndGlyphs">house building (Kaispeich-</text><text x="197" y="735.5" font-size="10" font-family="Liberation Serif, serif" fill="#111" stroke="#111" stroke-width="0.3" textLength="111" lengthAdjust="spacingAndGlyphs">er A, built 1963) near the</text><text x="197" y="745.5" font-size="10" font-family="Liberation Serif, serif" fill="#111" stroke="#111" stroke-width="0.3" textLength="111" lengthAdjust="spacingAndGlyphs">historical   Speicherstadt</text><text x="197" y="755.5" font-size="10" font-family="Liberation Serif, serif" fill="#111" stroke="#111" stroke-width="0.3" textLength="111" lengthAdjust="spacingAndGlyphs">and is designed by archi-</text><text x="197" y="765.5" font-size="10" font-family="Liberation Serif, serif" fill="#111" stroke="#111" stroke-width="0.3" textLength="111" lengthAdjust="spacingAndGlyphs">tecture firm Herzog &amp; de</text><text x="197" y="775.5" font-size="10" font-family="Liberation Serif, serif" fill="#111" stroke="#111" stroke-width="0.3" textLength="111" lengthAdjust="spacingAndGlyphs">Meuron. It is the tallest in-</text><text x="197" y="785.5" font-size="10" font-family="Liberation Serif, serif" fill="#111" stroke="#111" stroke-width="0.3" textLength="111" lengthAdjust="spacingAndGlyphs">habited building of Ham-</text><text x="197" y="795.5" font-size="10" font-family="Liberation Serif, serif" fill="#111" stroke="#111" stroke-width="0.3" textLength="111" lengthAdjust="spacingAndGlyphs">burg, with a final height of</text><text x="197" y="805.5" font-size="10" font-family="Liberation Serif, serif" fill="#111" stroke="#111" stroke-width="0.3" textLength="84" lengthAdjust="spacingAndGlyphs">108 metres (354 ft).</text><text x="197" y="815.5" font-size="10" font-family="Liberation Serif, serif" fill="#111" stroke="#111" stroke-width="0.3" textLength="111" lengthAdjust="spacingAndGlyphs">On 2 April 2007, the foun-</text><text x="197" y="825.5" font-size="10" font-family="Liberation Serif, serif" fill="#111" stroke="#111" stroke-width="0.3" textLength="111" lengthAdjust="spacingAndGlyphs">dation stone was laid in the</text><text x="319" y="655.5" font-size="10" font-family="Liberation Serif, serif" fill="#111" stroke="#111" stroke-width="0.3" textLength="111" lengthAdjust="spacingAndGlyphs">warehouse Kaispeicher A</text><text x="319" y="665.5" font-size="10" font-family="Liberation Serif, serif" fill="#111" stroke="#111" stroke-width="0.3" textLength="111" lengthAdjust="spacingAndGlyphs">(de), in the presence of</text><text x="319" y="675.5" font-size="10" font-family="Liberation Serif, serif" fill="#111" stroke="#111" stroke-width="0.3" textLength="111" lengthAdjust="spacingAndGlyphs">then First Mayor of Ham-</text><text x="319" y="685.5" font-size="10" font-family="Liberation Serif, serif" fill="#111" stroke="#111" stroke-width="0.3" textLength="111" lengthAdjust="spacingAndGlyphs">burg Ole von Beust, Hoch-</text><text x="319" y="695.5" font-size="10" font-family="Liberation Serif, serif" fill="#111" stroke="#111" stroke-width="0.3" textLength="111" lengthAdjust="spacingAndGlyphs">tief Construction AG CEO</text><text x="319" y="705.5" font-size="10" font-family="Liberation Serif, serif" fill="#111" stroke="#111" stroke-width="0.3" textLength="111" lengthAdjust="spacingAndGlyphs">Henner Mahlstedt, Hoch-</text><text x="319" y="715.5" font-size="10" font-family="Liberation Serif, serif" fill="#111" stroke="#111" stroke-width="0.3" textLength="111" lengthAdjust="spacingAndGlyphs">tief project coordinator</text><text x="319" y="725.5" font-size="10" font-family="Liberation Serif, serif" fill="#111" stroke="#111" stroke-width="0.3" textLength="111" lengthAdjust="spacingAndGlyphs">Hartmut Wegener, Ham-</text><text x="319" y="735.5" font-size="10" font-family="Liberation Serif, serif" fill="#111" stroke="#111" stroke-width="0.3" textLength="111" lengthAdjust="spacingAndGlyphs">burg Minister of Culture</text><text x="319" y="745.5" font-size="10" font-family="Liberation Serif, serif" fill="#111" stroke="#111" stroke-width="0.3" textLength="111" lengthAdjust="spacingAndGlyphs">Karin von Welck and archi-</text><text x="319" y="755.5" font-size="10" font-family="Liberation Serif, serif" fill="#111" stroke="#111" stroke-width="0.3" textLength="92" lengthAdjust="spacingAndGlyphs">tect Pierre de Meuron.</text><text x="329" y="765.5" font-size="10" font-family="Liberation Serif, serif" fill="#111" stroke="#111" stroke-width="0.3" textLength="101" lengthAdjust="spacingAndGlyphs">In 2007, the construc-</text><text x="319" y="775.5" font-size="10" font-family="Liberation Serif, serif" fill="#111" stroke="#111" stroke-width="0.3" textLength="111" lengthAdjust="spacingAndGlyphs">tion was scheduled to be</text><text x="319" y="785.5" font-size="10" font-family="Liberation Serif, serif" fill="#111" stroke="#111" stroke-width="0.3" textLength="111" lengthAdjust="spacingAndGlyphs">finished by 2010 with an</text><text x="319" y="795.5" font-size="10" font-family="Liberation Serif, serif" fill="#111" stroke="#111" stroke-width="0.3" textLength="111" lengthAdjust="spacingAndGlyphs">estimated cost of €241 mil-</text><text x="319" y="805.5" font-size="10" font-family="Liberation Serif, serif" fill="#111" stroke="#111" stroke-width="0.3" textLength="111" lengthAdjust="spacingAndGlyphs">lion.[8][9] In November</text><text x="319" y="815.5" font-size="10" font-family="Liberation Serif, serif" fill="#111" stroke="#111" stroke-width="0.3" textLength="111" lengthAdjust="spacingAndGlyphs">2008, after the original</text><text x="319" y="825.5" font-size="10" font-family="Liberation Serif, serif" fill="#111" stroke="#111" stroke-width="0.3" textLength="111" lengthAdjust="spacingAndGlyphs">contract was amended, the</text><rect x="75" y="190" width="476" height="637" fill="url(#hatch)"/><path d="M186.5 190V486" stroke="#b8c4dc" stroke-width="1" opacity="0.4"/><path d="M186.5 486V827" stroke="#8f9ab4" stroke-width="1" opacity="0.7"/><path d="M197 190V486" stroke="#b8c4dc" stroke-width="1" opacity="0.4"/><path d="M197 486V827" stroke="#8f9ab4" stroke-width="1" opacity="0.7"/><path d="M308 190V486" stroke="#b8c4dc" stroke-width="1" opacity="0.4"/><path d="M308 486V827" stroke="#8f9ab4" stroke-width="1" opacity="0.7"/><path d="M319 190V486" stroke="#b8c4dc" stroke-width="1" opacity="0.4"/><path d="M319 486V827" stroke="#8f9ab4" stroke-width="1" opacity="0.7"/><path d="M430 190V486" stroke="#b8c4dc" stroke-width="1" opacity="0.4"/><path d="M430 486V827" stroke="#8f9ab4" stroke-width="1" opacity="0.7"/><path d="M441 190V486" stroke="#b8c4dc" stroke-width="1" opacity="0.4"/><path d="M441 486V827" stroke="#8f9ab4" stroke-width="1" opacity="0.7"/><path d="M75 827V189.3H551V560" fill="none" stroke="#f6cf9f" stroke-width="1.6"/><path d="M75 827H437" stroke="#f0a95e" stroke-width="1.6"/><rect x="543" y="190" width="8" height="10" fill="#e22a22"/><rect x="543" y="190" width="8" height="10" fill="url(#hatch)"/><path d="M551 488V507H535Z" fill="#e63a2e"/><path d="M75.5 828V870" stroke="#333" stroke-width="1.2"/><path d="M67 186.3H75" stroke="#111" stroke-width="1.3"/><path d="M71 196.32H75" stroke="#111" stroke-width="1.3"/><path d="M71 206.34H75" stroke="#111" stroke-width="1.3"/><path d="M71 216.36H75" stroke="#111" stroke-width="1.3"/><path d="M71 226.38H75" stroke="#111" stroke-width="1.3"/><path d="M70 236.4H75" stroke="#111" stroke-width="1.3"/><text x="62" y="236.4" font-size="7.5" fill="#222">5</text><path d="M71 246.42H75" stroke="#111" stroke-width="1.3"/><path d="M71 256.44H75" stroke="#111" stroke-width="1.3"/><path d="M71 266.46H75" stroke="#111" stroke-width="1.3"/><path d="M71 276.48H75" stroke="#111" stroke-width="1.3"/><path d="M67 286.5H75" stroke="#111" stroke-width="1.3"/><text x="57" y="286.5" font-size="7.5" fill="#222" textLength="9.5" lengthAdjust="spacing">10</text><path d="M71 296.52H75" stroke="#111" stroke-width="1.3"/><path d="M71 306.54H75" stroke="#111" stroke-width="1.3"/><path d="M71 316.56H75" stroke="#111" stroke-width="1.3"/><path d="M71 326.58H75" stroke="#111" stroke-width="1.3"/><path d="M70 336.6H75" stroke="#111" stroke-width="1.3"/><text x="57" y="336.6" font-size="7.5" fill="#222" textLength="9.5" lengthAdjust="spacing">15</text><path d="M71 346.62H75" stroke="#111" stroke-width="1.3"/><path d="M71 356.64H75" stroke="#111" stroke-width="1.3"/><path d="M71 366.66H75" stroke="#111" stroke-width="1.3"/><path d="M71 376.68H75" stroke="#111" stroke-width="1.3"/><path d="M67 386.7H75" stroke="#111" stroke-width="1.3"/><text x="57" y="386.7" font-size="7.5" fill="#222" textLength="9.5" lengthAdjust="spacing">20</text><path d="M71 396.72H75" stroke="#111" stroke-width="1.3"/><path d="M71 406.74H75" stroke="#111" stroke-width="1.3"/><path d="M71 416.76H75" stroke="#111" stroke-width="1.3"/><path d="M71 426.78H75" stroke="#111" stroke-width="1.3"/><path d="M70 436.8H75" stroke="#111" stroke-width="1.3"/><text x="57" y="436.8" font-size="7.5" fill="#222" textLength="9.5" lengthAdjust="spacing">25</text><path d="M71 446.82H75" stroke="#111" stroke-width="1.3"/><path d="M71 456.84H75" stroke="#111" stroke-width="1.3"/><path d="M71 466.86H75" stroke="#111" stroke-width="1.3"/><path d="M71 476.88H75" stroke="#111" stroke-width="1.3"/><path d="M67 486.9H75" stroke="#111" stroke-width="1.3"/><text x="57" y="486.9" font-size="7.5" fill="#222" textLength="9.5" lengthAdjust="spacing">30</text><path d="M71 496.92H75" stroke="#111" stroke-width="1.3"/><path d="M71 506.94H75" stroke="#111" stroke-width="1.3"/><path d="M71 516.96H75" stroke="#111" stroke-width="1.3"/><path d="M71 526.98H75" stroke="#111" stroke-width="1.3"/><path d="M70 537H75" stroke="#111" stroke-width="1.3"/><text x="57" y="537" font-size="7.5" fill="#222" textLength="9.5" lengthAdjust="spacing">35</text><path d="M71 547.02H75" stroke="#111" stroke-width="1.3"/><path d="M71 557.04H75" stroke="#111" stroke-width="1.3"/><path d="M71 567.06H75" stroke="#111" stroke-width="1.3"/><path d="M71 577.08H75" stroke="#111" stroke-width="1.3"/><path d="M67 587.1H75" stroke="#111" stroke-width="1.3"/><text x="57" y="587.1" font-size="7.5" fill="#222" textLength="9.5" lengthAdjust="spacing">40</text><path d="M71 597.12H75" stroke="#111" stroke-width="1.3"/><path d="M71 607.14H75" stroke="#111" stroke-width="1.3"/><path d="M71 617.16H75" stroke="#111" stroke-width="1.3"/><path d="M71 627.18H75" stroke="#111" stroke-width="1.3"/><path d="M70 637.2H75" stroke="#111" stroke-width="1.3"/><text x="57" y="637.2" font-size="7.5" fill="#222" textLength="9.5" lengthAdjust="spacing">45</text><path d="M71 647.22H75" stroke="#111" stroke-width="1.3"/><path d="M71 657.24H75" stroke="#111" stroke-width="1.3"/><path d="M71 667.26H75" stroke="#111" stroke-width="1.3"/><path d="M71 677.28H75" stroke="#111" stroke-width="1.3"/><path d="M67 687.3H75" stroke="#111" stroke-width="1.3"/><text x="57" y="687.3" font-size="7.5" fill="#222" textLength="9.5" lengthAdjust="spacing">50</text><path d="M71 697.32H75" stroke="#111" stroke-width="1.3"/><path d="M71 707.34H75" stroke="#111" stroke-width="1.3"/><path d="M71 717.36H75" stroke="#111" stroke-width="1.3"/><path d="M71 727.38H75" stroke="#111" stroke-width="1.3"/><path d="M70 737.4H75" stroke="#111" stroke-width="1.3"/><text x="57" y="737.4" font-size="7.5" fill="#222" textLength="9.5" lengthAdjust="spacing">55</text><path d="M71 747.42H75" stroke="#111" stroke-width="1.3"/><path d="M71 757.44H75" stroke="#111" stroke-width="1.3"/><path d="M71 767.46H75" stroke="#111" stroke-width="1.3"/><path d="M71 777.48H75" stroke="#111" stroke-width="1.3"/><path d="M67 787.5H75" stroke="#111" stroke-width="1.3"/><text x="57" y="787.5" font-size="7.5" fill="#222" textLength="9.5" lengthAdjust="spacing">60</text><path d="M71 797.52H75" stroke="#111" stroke-width="1.3"/><path d="M71 807.54H75" stroke="#111" stroke-width="1.3"/><path d="M71 817.56H75" stroke="#111" stroke-width="1.3"/><path d="M71 827.58H75" stroke="#111" stroke-width="1.3"/><path d="M70 837.6H75" stroke="#111" stroke-width="1.3"/><text x="57" y="837.6" font-size="7.5" fill="#222" textLength="9.5" lengthAdjust="spacing">65</text><path d="M71 847.62H75" stroke="#111" stroke-width="1.3"/><path d="M71 857.64H75" stroke="#111" stroke-width="1.3"/><path d="M71 867.66H75" stroke="#111" stroke-width="1.3"/><rect x="72" y="186" width="7" height="7" fill="#fb55bd"/><rect x="127" y="186" width="7" height="7" fill="#fb55bd"/><rect x="188" y="186" width="7" height="7" fill="#fb55bd"/><rect x="249.5" y="186" width="7" height="7" fill="#fb55bd"/><rect x="310.5" y="186" width="7" height="7" fill="#fb55bd"/><rect x="371.5" y="186" width="7" height="7" fill="#fb55bd"/><rect x="432.5" y="186" width="7" height="7" fill="#fb55bd"/><rect x="493.5" y="186" width="7" height="7" fill="#fb55bd"/><rect x="548" y="186" width="7" height="7" fill="#fb55bd"/><rect x="72" y="504" width="7" height="7" fill="#fb55bd"/><rect x="548" y="504" width="7" height="7" fill="#fb55bd"/><rect x="72" y="823.5" width="7" height="7" fill="#fb55bd"/><rect x="127" y="823.5" width="7" height="7" fill="#fb55bd"/><rect x="188" y="823.5" width="7" height="7" fill="#fb55bd"/><rect x="249.5" y="823.5" width="7" height="7" fill="#fb55bd"/><rect x="310.5" y="823.5" width="7" height="7" fill="#fb55bd"/><rect x="371.5" y="823.5" width="7" height="7" fill="#fb55bd"/><rect x="432.5" y="823.5" width="7" height="7" fill="#fb55bd"/></svg></div><div class="a" style="left:720px;top:106px;width:17px;height:758px;background:#cacaca"></div><div class="a" style="left:729px;top:124px;width:8px;height:740px;background:#c5c5c5"></div><div class="a" style="left:720px;top:106px;width:17px;height:18px;background:#f0f0f0"></div><svg class="a" style="left:724px;top:112px" width="8" height="7" viewBox="0 0 8 7"><path d="M0.8 6L4 2.6L7.2 6" fill="none" stroke="#444" stroke-width="1.8"/></svg><div class="a" style="left:737px;top:106px;width:27px;height:800px;background:#f0f0f0;border-left:1px solid #8a8a8a;box-sizing:border-box"></div><svg class="a" style="left:745px;top:110px" width="10" height="9" viewBox="0 0 10 9" fill="none" stroke="#444" stroke-width="1.1"><path d="M4.5 0.7L1 4.5L4.5 8.3M9 0.7L5.5 4.5L9 8.3"/></svg><div class="tab" style="top:122px;height:66px"></div><div class="grip" style="left:741px;top:127px;width:20px;"></div><span class="vt" style="left:756.16px;top:142.30px;font:normal normal 12px/12px 'Liberation Sans';transform:rotate(90deg) scaleX(0.9824);">Design</span><div class="tab" style="top:188px;height:55px"></div><div class="grip" style="left:741px;top:193px;width:20px;"></div><span class="vt" style="left:756.16px;top:207.90px;font:normal normal 12px/12px 'Liberation Sans';transform:rotate(90deg) scaleX(1.0109);">Type</span><div class="tab" style="top:243px;height:63px"></div><div class="grip" style="left:741px;top:248px;width:20px;"></div><span class="vt" style="left:756.16px;top:263.10px;font:normal normal 12px/12px 'Liberation Sans';transform:rotate(90deg) scaleX(1.0257);">Article</span><div class="tab" style="top:306px;height:63px"></div><div class="grip" style="left:741px;top:311px;width:20px;"></div><span class="vt" style="left:756.16px;top:325.60px;font:normal normal 12px/12px 'Liberation Sans';transform:rotate(90deg) scaleX(1.0032);">Object</span><div class="tab" style="top:369px;height:58px"></div><div class="grip" style="left:741px;top:374px;width:20px;"></div><span class="vt" style="left:756.16px;top:389.40px;font:normal normal 12px/12px 'Liberation Sans';transform:rotate(90deg) scaleX(0.9900);">Color</span><div class="tab" style="top:427px;height:65px"></div><div class="grip" style="left:741px;top:432px;width:20px;"></div><span class="vt" style="left:756.16px;top:447.10px;font:normal normal 12px/12px 'Liberation Sans';transform:rotate(90deg) scaleX(1.0047);">Layout</span><div class="tab" style="top:492px;height:61px"></div><div class="grip" style="left:741px;top:497px;width:20px;"></div><span class="vt" style="left:756.16px;top:512.30px;font:normal normal 12px/12px 'Liberation Sans';transform:rotate(90deg) scaleX(0.9051);">Pages</span><div class="tab" style="top:553px;height:30px"></div><div class="a" style="left:36px;top:864px;width:701px;height:15px;background:linear-gradient(180deg,#c9c9c9 0,#c9c9c9 45%,#c4c4c4 45%)"></div><div class="a" style="left:36px;top:864px;width:17px;height:15px;background:#f0f0f0"></div><svg class="a" style="left:41px;top:867px" width="7" height="9" viewBox="0 0 7 9"><path d="M5.8 0.8L2 4.5L5.8 8.2" fill="none" stroke="#444" stroke-width="1.6"/></svg><div class="a" style="left:1px;top:879px;width:763px;height:29px;background:#f0f0f0;border-top:1px solid #e4e4e4;box-sizing:border-box"></div><span class="t" style="left:12.60px;top:888.34px;font:normal normal 12px/12px 'Liberation Sans';transform:scaleX(0.9283);">Ready</span><span class="t" style="left:215.60px;top:888.34px;font:normal normal 12px/12px 'Liberation Sans';transform:scaleX(0.8560);">ARTICLE</span><div class="a" style="left:274px;top:884px;width:132px;height:20px;overflow:hidden"><span class="t" style="left:-0.40px;top:4.34px;font:normal normal 12px/12px 'Liberation Sans';transform:scaleX(1.0146);">Hamburg Highlights 2024</span></div><div class="vsep" style="left:413px;top:881px;height:25px;background:#dcdcdc"></div><svg class="a" style="left:423px;top:886px" width="15" height="15" viewBox="0 0 15 15" fill="none" stroke="#707070" stroke-width="1.7"><path d="M1 5.5V1H5.5M1.5 1.5L5.8 5.8M9.5 1H14V5.5M13.5 1.5L9.2 5.8M1 9.5V14H5.5M1.5 13.5L5.8 9.2M14 9.5V14H9.5M13.5 13.5L9.2 9.2"/></svg><div class="a" style="left:0;top:0;width:765px;height:909px;box-sizing:border-box;border:1px solid #3c3c3c;border-right-color:#555;border-bottom-color:#555;pointer-events:none"></div></div><div class="a" style="left:168px;top:0px;width:48px;height:25px;box-sizing:border-box;border:2px solid #e2593a;border-top-color:#b23a22"></div><div class="a" style="left:441px;top:555px;width:347px;height:600px;background:linear-gradient(90deg,#f8f8f8 0,#f1f1f1 6px,#f1f1f1 100%);border:1px solid #d2d2d2;border-left-color:#a9adb3;box-sizing:border-box;box-shadow:1px 1px 2px rgba(0,0,0,0.28)"></div><span class="t" style="left:475.60px;top:562.94px;font:normal normal 12px/12px 'Liberation Sans';transform:scaleX(1.0513);color:#000;">Unmount</span><span class="t" style="left:731.60px;top:562.94px;font:normal normal 12px/12px 'Liberation Sans';transform:scaleX(1.0249);color:#000;">Ctrl+U</span><span class="t" style="left:475.60px;top:584.94px;font:normal normal 12px/12px 'Liberation Sans';color:#000;">Revert to Dummy</span><span class="t" style="left:699.60px;top:584.94px;font:normal normal 12px/12px 'Liberation Sans';transform:scaleX(1.0282);color:#000;">Ctrl+Shift+U</span><span class="t" style="left:475.60px;top:606.94px;font:normal normal 12px/12px 'Liberation Sans';transform:scaleX(0.9816);color:#000;">Revert to Dummy &amp; Delete Package</span><div class="sep" style="left:472px;top:627px;width:313px"></div><span class="t" style="left:475.60px;top:635.94px;font:normal normal 12px/12px 'Liberation Sans';transform:scaleX(0.9785);color:#000;">Break Up Article</span><span class="t" style="left:698.60px;top:635.94px;font:normal normal 12px/12px 'Liberation Sans';transform:scaleX(1.0435);color:#000;">Ctrl+Shift+N</span><div class="sep" style="left:472px;top:656px;width:313px"></div><span class="t" style="left:475.60px;top:664.94px;font:normal normal 12px/12px 'Liberation Sans';transform:scaleX(1.0219);color:#000;">Adapt Article Content</span><div class="sep" style="left:472px;top:685px;width:313px"></div><span class="t" style="left:475.60px;top:693.94px;font:normal normal 12px/12px 'Liberation Sans';transform:scaleX(1.0034);color:#000;">Duplicate</span><span class="t" style="left:475.60px;top:715.94px;font:normal normal 12px/12px 'Liberation Sans';transform:scaleX(0.9955);color:#000;">Duplicate as Dummy</span><span class="t" style="left:699.60px;top:715.94px;font:normal normal 12px/12px 'Liberation Sans';transform:scaleX(1.0282);color:#000;">Ctrl+Shift+C</span><span class="t" style="left:475.60px;top:737.94px;font:normal normal 12px/12px 'Liberation Sans';color:#000;">Multiple Copies...</span><div class="sep" style="left:472px;top:758px;width:313px"></div><span class="t" style="left:475.60px;top:766.94px;font:normal normal 12px/12px 'Liberation Sans';transform:scaleX(1.0493);color:#000;">Zoom</span><svg class="a" style="left:770.8px;top:767.5px" width="6" height="9" viewBox="0 0 6 9"><path d="M0.8 0.7L4.8 4.5L0.8 8.3" fill="none" stroke="#333" stroke-width="1.1"/></svg><div class="sep" style="left:472px;top:787px;width:313px"></div><span class="t" style="left:475.60px;top:795.94px;font:normal normal 12px/12px 'Liberation Sans';transform:scaleX(0.9347);color:#000;">State</span><svg class="a" style="left:770.8px;top:796.5px" width="6" height="9" viewBox="0 0 6 9"><path d="M0.8 0.7L4.8 4.5L0.8 8.3" fill="none" stroke="#333" stroke-width="1.1"/></svg><div class="sep" style="left:472px;top:816px;width:313px"></div><span class="t" style="left:475.60px;top:824.94px;font:normal normal 12px/12px 'Liberation Sans';transform:scaleX(1.0216);color:#000;">Open with</span><svg class="a" style="left:770.8px;top:825.5px" width="6" height="9" viewBox="0 0 6 9"><path d="M0.8 0.7L4.8 4.5L0.8 8.3" fill="none" stroke="#333" stroke-width="1.1"/></svg><div class="sep" style="left:472px;top:845px;width:313px"></div><span class="t" style="left:475.60px;top:853.94px;font:normal normal 12px/12px 'Liberation Sans';transform:scaleX(0.9882);color:#000;">Arrange</span><svg class="a" style="left:770.8px;top:854.5px" width="6" height="9" viewBox="0 0 6 9"><path d="M0.8 0.7L4.8 4.5L0.8 8.3" fill="none" stroke="#333" stroke-width="1.1"/></svg><span class="t" style="left:475.60px;top:875.94px;font:normal normal 12px/12px 'Liberation Sans';transform:scaleX(0.9353);color:#000;">Select</span><svg class="a" style="left:770.8px;top:876.5px" width="6" height="9" viewBox="0 0 6 9"><path d="M0.8 0.7L4.8 4.5L0.8 8.3" fill="none" stroke="#333" stroke-width="1.1"/></svg><div class="sep" style="left:472px;top:896px;width:313px"></div><span class="t" style="left:475.60px;top:904.94px;font:normal normal 12px/12px 'Liberation Sans';transform:scaleX(1.0463);color:#000;">Fitting</span><svg class="a" style="left:770.8px;top:905.5px" width="6" height="9" viewBox="0 0 6 9"><path d="M0.8 0.7L4.8 4.5L0.8 8.3" fill="none" stroke="#333" stroke-width="1.1"/></svg><div class="sep" style="left:472px;top:925px;width:313px"></div><span class="t" style="left:475.60px;top:933.94px;font:normal normal 12px/12px 'Liberation Sans';transform:scaleX(0.9516);color:#000;">Lock/Release</span><svg class="a" style="left:770.8px;top:934.5px" width="6" height="9" viewBox="0 0 6 9"><path d="M0.8 0.7L4.8 4.5L0.8 8.3" fill="none" stroke="#333" stroke-width="1.1"/></svg><div class="sep" style="left:472px;top:954px;width:313px"></div><span class="t" style="left:475.60px;top:962.94px;font:normal normal 12px/12px 'Liberation Sans';transform:scaleX(0.9326);color:#000;">Typeset</span><svg class="a" style="left:770.8px;top:963.5px" width="6" height="9" viewBox="0 0 6 9"><path d="M0.8 0.7L4.8 4.5L0.8 8.3" fill="none" stroke="#333" stroke-width="1.1"/></svg><span class="t" style="left:475.60px;top:984.94px;font:normal normal 12px/12px 'Liberation Sans';transform:scaleX(1.0179);color:#000;">Proof</span><svg class="a" style="left:770.8px;top:985.5px" width="6" height="9" viewBox="0 0 6 9"><path d="M0.8 0.7L4.8 4.5L0.8 8.3" fill="none" stroke="#333" stroke-width="1.1"/></svg><div class="sep" style="left:472px;top:1005px;width:313px"></div><span class="t" style="left:475.60px;top:1013.94px;font:normal normal 12px/12px 'Liberation Sans';transform:scaleX(0.9705);color:#000;">Display</span><svg class="a" style="left:770.8px;top:1014.5px" width="6" height="9" viewBox="0 0 6 9"><path d="M0.8 0.7L4.8 4.5L0.8 8.3" fill="none" stroke="#333" stroke-width="1.1"/></svg><span class="t" style="left:475.60px;top:1035.94px;font:normal normal 12px/12px 'Liberation Sans';transform:scaleX(0.9720);color:#000;">Create/Edit Story Folder...</span><span class="t" style="left:475.60px;top:1057.94px;font:normal normal 12px/12px 'Liberation Sans';transform:scaleX(0.9864);color:#000;">Add to Story Folder...</span><span class="t" style="left:475.60px;top:1079.94px;font:normal normal 12px/12px 'Liberation Sans';transform:scaleX(0.9710);color:#000;">Go to Story Folder</span><span class="t" style="left:732.60px;top:1079.94px;font:normal normal 12px/12px 'Liberation Sans';transform:scaleX(0.9958);color:#000;">Ctrl+R</span><div class="sep" style="left:472px;top:1100px;width:313px"></div><span class="t" style="left:475.60px;top:1108.94px;font:normal normal 12px/12px 'Liberation Sans';transform:scaleX(1.0257);color:#000;">Article</span><span class="t" style="left:703.60px;top:1108.94px;font:normal normal 12px/12px 'Liberation Sans';transform:scaleX(1.0525);color:#000;">Alt+Shift+A</span><span class="t" style="left:475.60px;top:1130.94px;font:normal normal 12px/12px 'Liberation Sans';transform:scaleX(1.0047);color:#000;">Layout</span><svg class="a" style="left:446px;top:633px" width="18" height="18" viewBox="0 0 18 18" fill="none"><path d="M2.6 2.6H16V12.6H11.4V15.6H2.6Z" fill="#f6f6f6" stroke="#2e2e2e" stroke-width="1.2"/><rect x="4.6" y="4.2" width="9" height="1.3" fill="#444"/><rect x="4.6" y="6.6" width="3.6" height="6.8" fill="#5a5a5a"/><rect x="10" y="6.6" width="3.6" height="4" fill="#5a5a5a"/><path d="M1.2 1.2L17 17M17 1.2L1.2 17" stroke="#c9305c" stroke-width="1.1"/></svg><div class="a" style="left:788px;top:816px;width:332px;height:71px;background:#f2f2f2;border:1px solid #d2d2d2;box-sizing:border-box"></div><div class="a" style="left:788px;top:816px;width:332px;height:26px;box-sizing:border-box;border:3px solid #ef6240;background:#f6f6f6;"></div><span class="t" style="left:823.50px;top:823.74px;font:normal normal 12px/12px 'Liberation Sans';transform:scaleX(0.8365);color:#000;">CUE</span><span class="t" style="left:822.60px;top:845.74px;font:normal normal 12px/12px 'Liberation Sans';transform:scaleX(0.9544);color:#000;">CUE Composer</span><span class="t" style="left:1065.60px;top:845.74px;font:normal normal 12px/12px 'Liberation Sans';transform:scaleX(0.9855);color:#000;">Ctrl+E</span><span class="t" style="left:822.60px;top:867.74px;font:normal normal 12px/12px 'Liberation Sans';transform:scaleX(0.9606);color:#000;">CUE Composer (and Go to Story Folder)</span><div class="a" style="left:794px;top:822px;width:16px;height:16px;background:#4d4f52"></div><span class="t" style="left:794.60px;top:831.70px;font:normal bold 6.5px/6.5px 'Liberation Sans';transform:scaleX(1.0557);color:#fff;">CUE</span><div class="a" style="left:794.5px;top:844.5px;width:15.5px;height:14.5px;background:#ee7a22;border-radius:8px 2px 2px 8px"></div><span class="t" style="left:797.10px;top:847.90px;font:normal bold 8.5px/8.5px 'Liberation Sans';transform:scaleX(0.9433);color:#fff;">Cp</span></body></html>
